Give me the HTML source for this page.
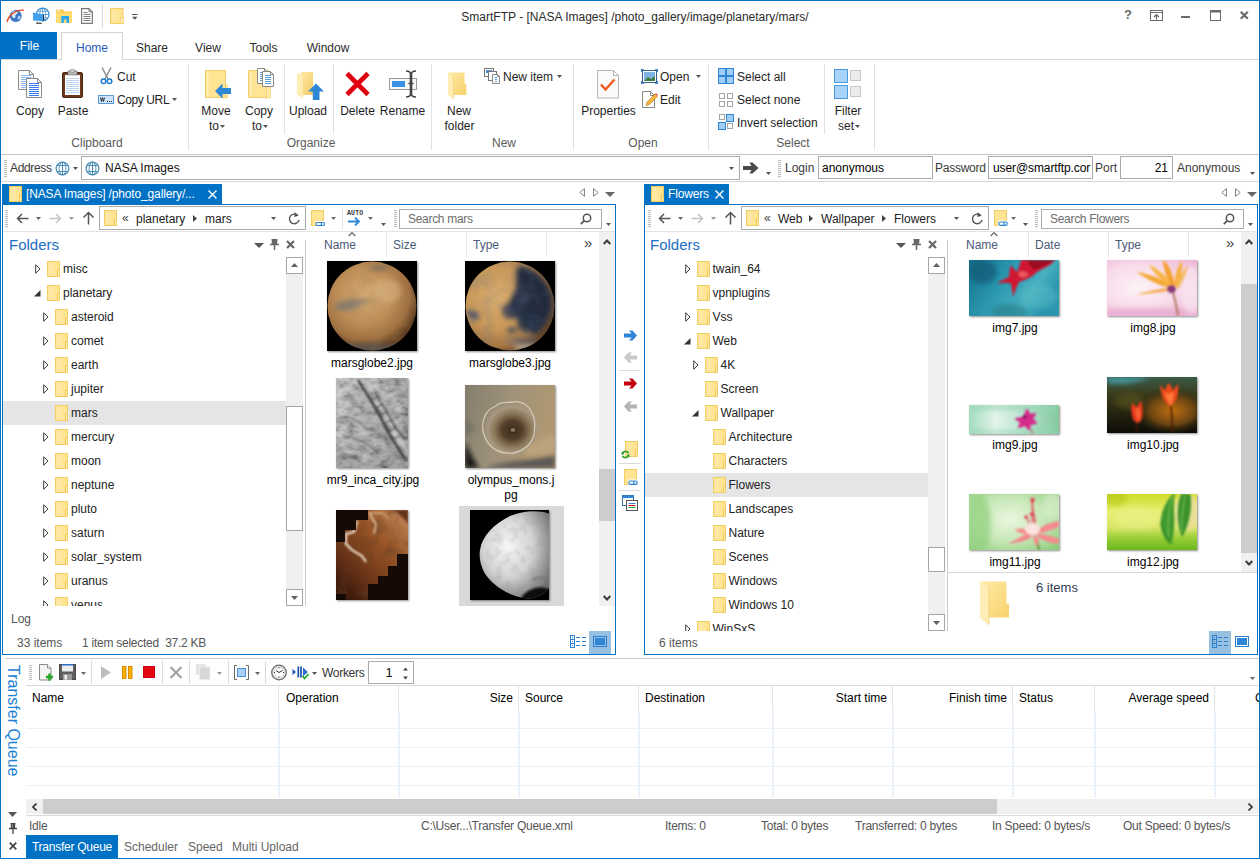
<!DOCTYPE html><html><head><meta charset="utf-8"><title>SmartFTP</title><style>
html,body{margin:0;padding:0;background:#fff;}
body{width:1260px;height:859px;overflow:hidden;position:relative;font-family:"Liberation Sans",sans-serif;font-size:12px;color:#1e1e1e;}
.b{position:absolute;box-sizing:border-box;display:block;}
.t{position:absolute;white-space:nowrap;line-height:16px;height:16px;}
.c{text-align:center;}
.r{text-align:right;}
.g{color:#5a5a5a;}
.w{color:#fff;}
.bl{color:#1a5fb4;}
.inp{background:#fff;border:1px solid #ababab;}
</style></head><body>
<div class="b" style="left:0px;top:0px;width:1260px;height:859px;border:1px solid #0072c6;pointer-events:none;z-index:50;"></div><svg class="b" style="left:6px;top:8px;" width="19" height="16" viewBox="0 0 19 16"><circle cx="9.700" cy="8" r="6" fill="#3b78c6"/><path d="M5.500 5c1.500-2 4-2.500 5.500-1.500s0.500 2-1 3s0.500 3-1.500 3.500s-3-2-3-5z" fill="#dbe8f7"/><path d="M12 8.500c1-1 2.500-0.500 2.500 0.500s-1 2.500-2 2.500s-1-2-0.500-3z" fill="#c4d8f0"/><path d="M1 13.500C3 7 9 1.500 17.500 2.200" fill="none" stroke="#e2491f" stroke-width="1.300" stroke-linecap="round"/></svg><svg class="b" style="left:32px;top:7px;" width="18" height="18" viewBox="0 0 18 18"><circle cx="10.700" cy="7.500" r="6.300" fill="#fff" stroke="#3a8ad0" stroke-width="1.200"/><ellipse cx="10.700" cy="7.500" rx="3" ry="6.300" fill="none" stroke="#3a8ad0" stroke-width="0.700"/><path d="M4.500 7.500h12.500M10.700 1.200v12.600M5.500 4.300h10.400M5.500 10.700h10.400" stroke="#3a8ad0" stroke-width="0.700" fill="none"/><path d="M1 5.500L11.500 7.500V14L1 13.500z" fill="#3fa0ee"/><path d="M11.500 7.500V14" stroke="#333" stroke-width="1"/><path d="M5 14.500l1 1.500h3M4 16.500h6" stroke="#555" stroke-width="0.900" fill="none"/></svg><svg class="b" style="left:56px;top:9px;" width="16" height="14" viewBox="0 0 16 14"><path d="M0 0.500h7l1.500 2h7.500v11.500H0z" fill="#ffc83a"/><rect x="0.800" y="1.200" width="3.500" height="1.300" fill="#e8f4ff"/><rect x="0" y="3.500" width="16" height="10.500" fill="#ffdc70"/><path d="M5.300 7h7.700v7h-2.500v-3.500h-2.700v3.500h-2.500z" fill="#2aa5ee"/></svg><svg class="b" style="left:81px;top:8px;" width="12" height="16" viewBox="0 0 12 16"><path d="M0.600 0.600h7.400l3.400 3.400v11.400h-10.800z" fill="#fff" stroke="#7a7a7a" stroke-width="1.200"/><path d="M8 0.600v3.400h3.400" fill="none" stroke="#7a7a7a" stroke-width="1"/><path d="M2.500 4.500h4M2.500 6.500h7M2.500 8.500h7M2.500 10.500h7M2.500 12.500h7" stroke="#6e6e6e" stroke-width="0.900"/></svg><div class="b" style="left:102px;top:4px;width:1px;height:24px;background:#d9d9d9;"></div><svg class="b" style="left:110px;top:8px;" width="14" height="16" viewBox="0 0 14 16"><rect x="0.500" y="0.500" width="12.500" height="15" fill="#ffe493" stroke="#f2cd62"/><rect x="1.500" y="1.500" width="5" height="13" fill="#ffebae" opacity="0.600"/><rect x="10.800" y="9.500" width="2.400" height="6" fill="#fff3c8" stroke="#f2cd62" stroke-width="0.800"/></svg><svg class="b" style="left:132px;top:14px;" width="6" height="6" viewBox="0 0 6 6"><rect x="0" y="0" width="5.500" height="1" fill="#555"/><path d="M0 2.700h5.500l-2.750 3z" fill="#555"/></svg><div class="t c" style="left:335px;top:9px;width:600px;color:#2b2b2b;">SmartFTP - [NASA Images] /photo_gallery/image/planetary/mars/</div><div class="t c" style="left:1121px;top:7px;width:14px;font-weight:bold;color:#6a6a6a;font-size:13px;">?</div><svg class="b" style="left:1150px;top:10px;" width="13" height="11" viewBox="0 0 13 11"><rect x="0.5" y="0.5" width="12" height="10" fill="none" stroke="#6a6a6a"/><path d="M1 2.5h11" stroke="#6a6a6a"/><path d="M6.5 4.5v5M4 7l2.5-2.5L9 7" stroke="#6a6a6a" fill="none" stroke-width="1.200"/></svg><div class="b" style="left:1181px;top:16px;width:9px;height:2px;background:#6a6a6a;"></div><svg class="b" style="left:1210px;top:10px;" width="11" height="11" viewBox="0 0 11 11"><rect x="0.5" y="1" width="10" height="9.5" fill="none" stroke="#6a6a6a"/><rect x="0" y="0" width="11" height="2.5" fill="#6a6a6a"/></svg><svg class="b" style="left:1240px;top:11px;" width="9" height="9" viewBox="0 0 9 9"><path d="M0.800 0.800l7 7M7.800 0.800l-7 7" stroke="#6a6a6a" stroke-width="2.200"/></svg><div class="b" style="left:1px;top:32px;width:56px;height:27px;background:#0072c6;"></div><div class="t c w" style="left:1px;top:38px;width:57px;">File</div><div class="b" style="left:0px;top:59px;width:1260px;height:1px;background:#d4d5d6;"></div><div class="b" style="left:61px;top:32px;width:62px;height:28px;background:#fff;border:1px solid #d4d5d6;border-bottom:none;"></div><div class="t c" style="left:61px;top:40px;width:62px;color:#1e5cb8;">Home</div><div class="t c" style="left:127px;top:40px;width:50px;color:#2b2b2b;">Share</div><div class="t c" style="left:185px;top:40px;width:46px;color:#2b2b2b;">View</div><div class="t c" style="left:239px;top:40px;width:49px;color:#2b2b2b;">Tools</div><div class="t c" style="left:295px;top:40px;width:66px;color:#2b2b2b;">Window</div>
<div class="b" style="left:188px;top:64px;width:1px;height:86px;background:#e1e2e3;"></div><div class="b" style="left:284px;top:64px;width:1px;height:70px;background:#e1e2e3;"></div><div class="b" style="left:333px;top:64px;width:1px;height:70px;background:#e1e2e3;"></div><div class="b" style="left:431px;top:64px;width:1px;height:86px;background:#e1e2e3;"></div><div class="b" style="left:573px;top:64px;width:1px;height:86px;background:#e1e2e3;"></div><div class="b" style="left:708px;top:64px;width:1px;height:86px;background:#e1e2e3;"></div><div class="b" style="left:824px;top:64px;width:1px;height:70px;background:#e1e2e3;"></div><div class="b" style="left:874px;top:64px;width:1px;height:86px;background:#e1e2e3;"></div><div class="t c g" style="left:47px;top:135px;width:100px;">Clipboard</div><div class="t c g" style="left:261px;top:135px;width:100px;">Organize</div><div class="t c g" style="left:454px;top:135px;width:100px;">New</div><div class="t c g" style="left:593px;top:135px;width:100px;">Open</div><div class="t c g" style="left:743px;top:135px;width:100px;">Select</div><div class="t c" style="left:-10px;top:103px;width:80px;">Copy</div><div class="t c" style="left:33px;top:103px;width:80px;">Paste</div><div class="t c" style="left:176px;top:103px;width:80px;">Move</div><div class="t c" style="left:219px;top:103px;width:80px;">Copy</div><div class="t c" style="left:268px;top:103px;width:80px;">Upload</div><div class="t c" style="left:317.5px;top:103px;width:80px;">Delete</div><div class="t c" style="left:362.5px;top:103px;width:80px;">Rename</div><div class="t c" style="left:419px;top:103px;width:80px;">New</div><div class="t c" style="left:568.5px;top:103px;width:80px;">Properties</div><div class="t c" style="left:808px;top:103px;width:80px;">Filter</div><div class="t c" style="left:174px;top:118px;width:80px;">to</div><div class="t c" style="left:217px;top:118px;width:80px;">to</div><div class="t c" style="left:419.5px;top:118px;width:80px;">folder</div><div class="t c" style="left:806px;top:118px;width:80px;">set</div><svg class="b" style="left:220px;top:125px;" width="5" height="3" viewBox="0 0 5 3"><path d="M0 0h5l-2.5 3z" fill="#555"/></svg><svg class="b" style="left:263px;top:125px;" width="5" height="3" viewBox="0 0 5 3"><path d="M0 0h5l-2.5 3z" fill="#555"/></svg><svg class="b" style="left:855px;top:125px;" width="5" height="3" viewBox="0 0 5 3"><path d="M0 0h5l-2.5 3z" fill="#555"/></svg><div class="t" style="left:117px;top:69px;">Cut</div><div class="t" style="left:117px;top:92px;letter-spacing:-0.4px;">Copy URL</div><svg class="b" style="left:172px;top:98px;" width="5" height="3" viewBox="0 0 5 3"><path d="M0 0h5l-2.5 3z" fill="#555"/></svg><div class="t" style="left:503px;top:69px;">New item</div><svg class="b" style="left:557px;top:75px;" width="5" height="3" viewBox="0 0 5 3"><path d="M0 0h5l-2.5 3z" fill="#555"/></svg><div class="t" style="left:660px;top:69px;">Open</div><svg class="b" style="left:696px;top:75px;" width="5" height="3" viewBox="0 0 5 3"><path d="M0 0h5l-2.5 3z" fill="#555"/></svg><div class="t" style="left:660px;top:92px;">Edit</div><div class="t" style="left:737px;top:69px;">Select all</div><div class="t" style="left:737px;top:92px;">Select none</div><div class="t" style="left:737px;top:115px;">Invert selection</div><svg class="b" style="left:17px;top:70px;" width="26" height="28" viewBox="0 0 26 28"><path d="M1.5 0.5h11l4 4v15h-15z" fill="#fff" stroke="#8a8a8a"/><path d="M12.5 0.5v4h4" fill="none" stroke="#8a8a8a"/><path d="M4 5.5h10" stroke="#8ab4f0"/><path d="M4 7.5h10" stroke="#8ab4f0"/><path d="M4 9.5h10" stroke="#8ab4f0"/><path d="M4 11.5h10" stroke="#8ab4f0"/><path d="M4 13.5h10" stroke="#8ab4f0"/><path d="M4 15.5h10" stroke="#8ab4f0"/><path d="M4 17.5h10" stroke="#8ab4f0"/><path d="M9.5 8.5h11l4 4v15h-15z" fill="#fff" stroke="#8a8a8a"/><path d="M20.5 8.5v4h4" fill="none" stroke="#8a8a8a"/><path d="M12 13.5h10" stroke="#3a7af0"/><path d="M12 15.5h10" stroke="#3a7af0"/><path d="M12 17.5h10" stroke="#3a7af0"/><path d="M12 19.5h10" stroke="#3a7af0"/><path d="M12 21.5h10" stroke="#3a7af0"/><path d="M12 23.5h10" stroke="#3a7af0"/><path d="M12 25.5h10" stroke="#3a7af0"/></svg><svg class="b" style="left:62px;top:69px;" width="22" height="30" viewBox="0 0 22 30"><rect x="0.5" y="3.5" width="20" height="25" rx="1.5" fill="#6b3a1e" stroke="#4a2712"/><rect x="3" y="6" width="15" height="20" fill="#fff"/><path d="M4 9.5h13M4 11.5h13M4 13.5h13M4 15.5h13M4 17.5h13M4 19.5h13M4 21.5h13M4 23.5h13" stroke="#bcd4f0"/><rect x="6" y="2" width="9" height="4" fill="#b9b9b9" stroke="#777" stroke-width="0.7"/><rect x="8.5" y="0.3" width="4" height="3" rx="1" fill="#ddd" stroke="#777" stroke-width="0.7"/></svg><svg class="b" style="left:100px;top:67px;" width="13" height="18" viewBox="0 0 13 18"><path d="M2 0.5L8 12M11 0.5L5 12" stroke="#8d8d8d" stroke-width="1.5" fill="none"/><circle cx="3.5" cy="14.2" r="2.3" fill="none" stroke="#1f7bd0" stroke-width="1.5"/><circle cx="9.5" cy="14.2" r="2.3" fill="none" stroke="#1f7bd0" stroke-width="1.5"/></svg><svg class="b" style="left:98px;top:95px;" width="16" height="9" viewBox="0 0 16 9"><rect x="0.5" y="0.5" width="15" height="8" fill="#cfe6fa" stroke="#5a9bd8"/><path d="M2.5 2.5l1 4l1-4l1 4l1-4" stroke="#223" fill="none" stroke-width="0.9"/><path d="M9 6.5h1M11 6.5h1M13 6.5h1" stroke="#223"/></svg><svg class="b" style="left:205px;top:70px;" width="27" height="29" viewBox="0 0 27 29"><rect x="0" y="0" width="21" height="28" fill="#ffe494"/><rect x="0.5" y="0.5" width="20" height="27" fill="none" stroke="#f0cf6a"/><rect x="2" y="1.500" width="1.500" height="25" fill="#fff0bc"/><rect x="20.500" y="15" width="2" height="13" fill="#ffe9a4" stroke="#f0cf6a" stroke-width="0.600"/><path d="M26 18H17.500V13.500l-7.500 7.500l7.500 7.500v-4.500H26z" fill="#2e86d6"/></svg><svg class="b" style="left:248px;top:68px;" width="27" height="31" viewBox="0 0 27 31"><rect x="0" y="2" width="21" height="28" fill="#ffe494"/><rect x="0.5" y="2.5" width="20" height="27" fill="none" stroke="#f0cf6a"/><rect x="2" y="3.500" width="1.500" height="25" fill="#fff0bc"/><rect x="18.500" y="19" width="4" height="11" fill="#ffe9a4" stroke="#f0cf6a" stroke-width="0.600"/><path d="M9.5 0.5h7l3 3v12h-10z" fill="#fff" stroke="#8a8a8a"/><path d="M16.5 0.5v3h3" fill="none" stroke="#8a8a8a"/><path d="M12 4.5h5" stroke="#5b9bd5"/><path d="M12 6.5h5" stroke="#5b9bd5"/><path d="M12 8.5h5" stroke="#5b9bd5"/><path d="M12 10.5h5" stroke="#5b9bd5"/><path d="M12 12.5h5" stroke="#5b9bd5"/><path d="M14.5 3.5h8l3 3v12h-11z" fill="#fff" stroke="#8a8a8a"/><path d="M22.5 3.5v3h3" fill="none" stroke="#8a8a8a"/><path d="M17 7.5h6" stroke="#5b9bd5"/><path d="M17 9.5h6" stroke="#5b9bd5"/><path d="M17 11.5h6" stroke="#5b9bd5"/><path d="M17 13.5h6" stroke="#5b9bd5"/><path d="M17 15.5h6" stroke="#5b9bd5"/></svg><svg class="b" style="left:297px;top:72px;" width="28" height="29" viewBox="0 0 28 29"><defs><linearGradient id="ufg" x1="0" y1="0" x2="1" y2="1"><stop offset="0" stop-color="#ffe9a4"/><stop offset="1" stop-color="#f2cc66"/></linearGradient></defs><path d="M4 0h12v23H4z" fill="url(#ufg)"/><path d="M0 0.500L5.800 4V27L0 22.500z" fill="#ffedb4"/><path d="M19 11.500l8 8h-4.500V28h-6.700v-8.500H11z" fill="#2e86d6"/></svg><svg class="b" style="left:344px;top:71px;" width="27" height="26" viewBox="0 0 27 26"><path d="M3 2.5L24 23.5M24 2.5L3 23.5" stroke="#e0000f" stroke-width="4.6"/></svg><svg class="b" style="left:389px;top:70px;" width="29" height="28" viewBox="0 0 29 28"><rect x="0.5" y="8.500" width="27" height="11" fill="#f6f8fa" stroke="#9a9a9a"/><rect x="3" y="11" width="13" height="6" fill="#3a92e4"/><path d="M17 1c3 0 4.5 1 4.500 3v20c0 2-1.500 3-4.500 3M27 1c-3 0-4.500 1-4.500 3v20c0 2 1.500 3 4.500 3M19.500 13.500h5" stroke="#444" stroke-width="1.600" fill="none"/></svg><svg class="b" style="left:447.5px;top:71.5px;" width="19" height="28" viewBox="0 0 19 28"><defs><linearGradient id="nfg" x1="0" y1="0" x2="1" y2="1"><stop offset="0" stop-color="#ffe9a4"/><stop offset="1" stop-color="#f7d26c"/></linearGradient></defs><path d="M0 0.500h16.500v11h1.800v11.500H0z" fill="url(#nfg)"/><path d="M0 0.500L5.500 4V27.500L0 23z" fill="#ffedb4"/><path d="M5.500 4V27.500" stroke="#efcf78" stroke-width="0.700"/></svg><svg class="b" style="left:484px;top:68px;" width="17" height="17" viewBox="0 0 17 17"><rect x="0.5" y="0.5" width="9" height="8" fill="#fff" stroke="#777"/><rect x="2" y="2" width="6" height="3" fill="#4a90d9"/><rect x="4.500" y="3.500" width="8" height="9" fill="#fff" stroke="#777"/><path d="M8.5 6.5h5l2 2v7h-7z" fill="#fff" stroke="#8a8a8a"/><path d="M13.5 6.5v2h2" fill="none" stroke="#8a8a8a"/><path d="M11 9.5h2" stroke="#5b9bd5"/><path d="M11 11.5h2" stroke="#5b9bd5"/><path d="M11 13.5h2" stroke="#5b9bd5"/></svg><svg class="b" style="left:597px;top:70px;" width="23" height="29" viewBox="0 0 23 29"><path d="M0.5 0.5h16l5 5v22.500h-21z" fill="#fbfbfb" stroke="#b5b5b5"/><path d="M16.500 0.500v5h5" fill="none" stroke="#b5b5b5"/><path d="M4 14.500l4.500 5L17.500 9.500" fill="none" stroke="#f05a1e" stroke-width="2.400"/></svg><svg class="b" style="left:641px;top:69px;" width="17" height="15" viewBox="0 0 17 15"><rect x="1.5" y="1.5" width="14" height="12" fill="#fff" stroke="#3a5f8a"/><rect x="3" y="3" width="11" height="9" fill="#7fb4e0"/><path d="M3 12l4-4l3 2l4-3v5z" fill="#3e7a3a"/><path d="M0 3V0h3M14 0h3v3M17 12v3h-3M3 15H0v-3" fill="none" stroke="#1f6fc4" stroke-width="1.600"/></svg><svg class="b" style="left:642px;top:91px;" width="16" height="17" viewBox="0 0 16 17"><path d="M0.5 0.500h8l4 4v12h-12z" fill="#fff" stroke="#8a8a8a"/><path d="M8.500 0.500v4h4" fill="none" stroke="#8a8a8a"/><path d="M4 14.500l1-3.500l8-8l2.500 2.500l-8 8z" fill="#f4b63f" stroke="#b8801c" stroke-width="0.600"/><path d="M13 3l1-1l2 2l-1 1z" fill="#e8584a"/></svg><svg class="b" style="left:718px;top:68px;" width="16" height="16" viewBox="0 0 16 16"><rect x="0.5" y="0.5" width="7" height="7" fill="#9fcdf7" stroke="#2e86d6"/><rect x="8.5" y="0.5" width="7" height="7" fill="#9fcdf7" stroke="#2e86d6"/><rect x="0.5" y="8.5" width="7" height="7" fill="#9fcdf7" stroke="#2e86d6"/><rect x="8.5" y="8.5" width="7" height="7" fill="#9fcdf7" stroke="#2e86d6"/></svg><svg class="b" style="left:719px;top:93px;" width="14" height="14" viewBox="0 0 14 14"><rect x="0.5" y="0.5" width="5" height="5" fill="#fff" stroke="#a5a5a5"/><rect x="8.5" y="0.5" width="5" height="5" fill="#fff" stroke="#a5a5a5"/><rect x="0.5" y="8.5" width="5" height="5" fill="#fff" stroke="#a5a5a5"/><rect x="8.5" y="8.5" width="5" height="5" fill="#fff" stroke="#a5a5a5"/></svg><svg class="b" style="left:718px;top:114px;" width="16" height="16" viewBox="0 0 16 16"><rect x="1.5" y="0.5" width="5" height="5" fill="#fff" stroke="#a5a5a5"/><rect x="8.5" y="0.5" width="7" height="7" fill="#9fcdf7" stroke="#2e86d6"/><rect x="0.5" y="8.5" width="7" height="7" fill="#9fcdf7" stroke="#2e86d6"/><rect x="9.5" y="9.5" width="5" height="5" fill="#fff" stroke="#a5a5a5"/></svg><svg class="b" style="left:834px;top:69px;" width="28" height="30" viewBox="0 0 28 30"><rect x="0.5" y="0.5" width="13" height="13" fill="#a9d3f8" stroke="#4a98de"/><rect x="0.5" y="16.5" width="13" height="13" fill="#a9d3f8" stroke="#4a98de"/><rect x="16.5" y="1.5" width="10" height="10" fill="#ececec" stroke="#c6c6c6"/><rect x="16.5" y="17.5" width="10" height="10" fill="#ececec" stroke="#c6c6c6"/></svg>
<div class="b" style="left:0px;top:154px;width:1260px;height:1px;background:#c6c7c8;"></div><div class="b" style="left:0px;top:181px;width:1260px;height:1px;background:#d5d6d7;"></div><svg class="b" style="left:4px;top:160px;" width="3" height="18" viewBox="0 0 3 18"><rect x="0" y="0" width="3" height="1" fill="#b9b9b9"/><rect x="0" y="2" width="3" height="1" fill="#b9b9b9"/><rect x="0" y="4" width="3" height="1" fill="#b9b9b9"/><rect x="0" y="6" width="3" height="1" fill="#b9b9b9"/><rect x="0" y="8" width="3" height="1" fill="#b9b9b9"/><rect x="0" y="10" width="3" height="1" fill="#b9b9b9"/><rect x="0" y="12" width="3" height="1" fill="#b9b9b9"/><rect x="0" y="14" width="3" height="1" fill="#b9b9b9"/><rect x="0" y="16" width="3" height="1" fill="#b9b9b9"/></svg><div class="t" style="left:10px;top:160px;color:#3a3a3a;letter-spacing:-0.35px;">Address</div><svg class="b" style="left:55px;top:161px;" width="15" height="15" viewBox="0 0 15 15"><circle cx="7.5" cy="7.5" r="6.400" fill="#fff" stroke="#4a8db7" stroke-width="1.200"/><ellipse cx="7.5" cy="7.5" rx="3.400" ry="6.400" fill="none" stroke="#4a8db7" stroke-width="0.900"/><path d="M7.5 1v13M1.800 4.500h11.400M1.800 10.500h11.400" stroke="#4a8db7" stroke-width="1" fill="none" shape-rendering="crispEdges"/></svg><svg class="b" style="left:73px;top:167px;" width="5" height="3" viewBox="0 0 5 3"><path d="M0 0h5l-2.5 3z" fill="#555"/></svg><div class="b inp" style="left:81px;top:156px;width:659px;height:24px;"></div><svg class="b" style="left:85px;top:161px;" width="15" height="15" viewBox="0 0 15 15"><circle cx="7.5" cy="7.5" r="6.400" fill="#fff" stroke="#4a8db7" stroke-width="1.200"/><ellipse cx="7.5" cy="7.5" rx="3.400" ry="6.400" fill="none" stroke="#4a8db7" stroke-width="0.900"/><path d="M7.5 1v13M1.800 4.500h11.400M1.800 10.500h11.400" stroke="#4a8db7" stroke-width="1" fill="none" shape-rendering="crispEdges"/></svg><div class="t" style="left:105px;top:160px;color:#111;">NASA Images</div><svg class="b" style="left:729px;top:167px;" width="5" height="3" viewBox="0 0 5 3"><path d="M0 0h5l-2.5 3z" fill="#555"/></svg><svg class="b" style="left:743px;top:162px;" width="16" height="12" viewBox="0 0 16 12"><path d="M0 4h8.500L6.500 0.500h3L15.500 6L9.500 11.500h-3L8.500 8H0z" fill="#4a4a4a"/></svg><svg class="b" style="left:766px;top:172px;" width="5" height="3" viewBox="0 0 5 3"><path d="M0 0h5l-2.5 3z" fill="#555"/></svg><svg class="b" style="left:778px;top:160px;" width="3" height="18" viewBox="0 0 3 18"><rect x="0" y="0" width="3" height="1" fill="#b9b9b9"/><rect x="0" y="2" width="3" height="1" fill="#b9b9b9"/><rect x="0" y="4" width="3" height="1" fill="#b9b9b9"/><rect x="0" y="6" width="3" height="1" fill="#b9b9b9"/><rect x="0" y="8" width="3" height="1" fill="#b9b9b9"/><rect x="0" y="10" width="3" height="1" fill="#b9b9b9"/><rect x="0" y="12" width="3" height="1" fill="#b9b9b9"/><rect x="0" y="14" width="3" height="1" fill="#b9b9b9"/><rect x="0" y="16" width="3" height="1" fill="#b9b9b9"/></svg><div class="t" style="left:785px;top:160px;color:#3a3a3a;">Login</div><div class="b inp" style="left:818px;top:156px;width:115px;height:23px;"></div><div class="t" style="left:822px;top:160px;color:#000;">anonymous</div><div class="t" style="left:935px;top:160px;color:#3a3a3a;letter-spacing:-0.25px;">Password</div><div class="b inp" style="left:988px;top:156px;width:105px;height:23px;overflow:hidden;"></div><div class="t" style="left:993px;top:160px;color:#000;letter-spacing:-0.1px;">user@smartftp.cor</div><div class="t" style="left:1095px;top:160px;color:#3a3a3a;">Port</div><div class="b inp" style="left:1120px;top:156px;width:53px;height:23px;"></div><div class="t r" style="left:1120px;top:160px;width:48px;color:#000;">21</div><div class="t" style="left:1177px;top:160px;color:#3a3a3a;">Anonymous</div><svg class="b" style="left:1250px;top:172px;" width="5" height="3" viewBox="0 0 5 3"><path d="M0 0h5l-2.5 3z" fill="#555"/></svg>
<div class="b" style="left:2px;top:204px;width:614px;height:451px;border:1px solid #0072c6;background:#fff;"></div><div class="b" style="left:2px;top:184px;width:220px;height:21px;background:#0072c6;"></div><svg class="b" style="left:9px;top:186px;" width="13" height="16" viewBox="0 0 13 16"><rect x="0.5" y="0.5" width="12" height="15" fill="#ffe493" stroke="#f2cd62"/><rect x="1.5" y="1.5" width="5" height="13" fill="#ffebae" opacity="0.6"/><rect x="10.500" y="9" width="2" height="6.500" fill="#fff0be"/><path d="M10.500 15.500V9h2.500" fill="none" stroke="#f0c654" stroke-width="1"/><rect x="0.500" y="0.500" width="12" height="15" fill="none" stroke="#f2cd62"/></svg><div class="t w" style="left:26px;top:186px;letter-spacing:-0.15px;">[NASA Images] /photo_gallery/...</div><svg class="b" style="left:208px;top:190px;" width="9" height="9" viewBox="0 0 9 9"><path d="M0.500 0.500l8 8M8.500 0.500l-8 8" stroke="#fff" stroke-width="1.400"/></svg><svg class="b" style="left:579px;top:188px;" width="6" height="9" viewBox="0 0 6 9"><path d="M5.500 0.700V8.300L0.800 4.500z" fill="#fff" stroke="#777" stroke-width="0.900"/></svg><svg class="b" style="left:593px;top:188px;" width="6" height="9" viewBox="0 0 6 9"><path d="M0.500 0.700V8.300L5.200 4.500z" fill="#fff" stroke="#777" stroke-width="0.900"/></svg><svg class="b" style="left:605px;top:192px;" width="10" height="5" viewBox="0 0 10 5"><path d="M0 0h10l-5 5z" fill="#666"/></svg><svg class="b" style="left:5px;top:210px;" width="3" height="17" viewBox="0 0 3 17"><rect x="0" y="0" width="3" height="1" fill="#b9b9b9"/><rect x="0" y="2" width="3" height="1" fill="#b9b9b9"/><rect x="0" y="4" width="3" height="1" fill="#b9b9b9"/><rect x="0" y="6" width="3" height="1" fill="#b9b9b9"/><rect x="0" y="8" width="3" height="1" fill="#b9b9b9"/><rect x="0" y="10" width="3" height="1" fill="#b9b9b9"/><rect x="0" y="12" width="3" height="1" fill="#b9b9b9"/><rect x="0" y="14" width="3" height="1" fill="#b9b9b9"/><rect x="0" y="16" width="3" height="1" fill="#b9b9b9"/></svg><svg class="b" style="left:16px;top:213px;" width="13" height="11" viewBox="0 0 13 11"><path d="M12.500 5.500H1.500M6 1L1.500 5.500L6 10" fill="none" stroke="#555" stroke-width="1.500"/></svg><svg class="b" style="left:36px;top:217px;" width="5" height="3" viewBox="0 0 5 3"><path d="M0 0h5l-2.5 3z" fill="#666"/></svg><svg class="b" style="left:49px;top:213px;" width="13" height="11" viewBox="0 0 13 11"><path d="M0.500 5.500H11.500M7 1L11.500 5.500L7 10" fill="none" stroke="#c3c3c3" stroke-width="1.500"/></svg><svg class="b" style="left:69px;top:217px;" width="5" height="3" viewBox="0 0 5 3"><path d="M0 0h5l-2.5 3z" fill="#9a9a9a"/></svg><svg class="b" style="left:82px;top:211px;" width="13" height="14" viewBox="0 0 13 14"><path d="M6.500 13.500V1.500M1.500 6.500L6.500 1.500L11.500 6.500" fill="none" stroke="#555" stroke-width="1.500"/></svg><div class="b inp" style="left:99px;top:206px;width:207px;height:24px;"></div><svg class="b" style="left:104px;top:210px;" width="13" height="16" viewBox="0 0 13 16"><rect x="0.5" y="0.5" width="12" height="15" fill="#ffe493" stroke="#f2cd62"/><rect x="1.5" y="1.5" width="5" height="13" fill="#ffebae" opacity="0.6"/><rect x="10.500" y="9" width="2" height="6.500" fill="#fff0be"/><path d="M10.500 15.500V9h2.500" fill="none" stroke="#f0c654" stroke-width="1"/><rect x="0.500" y="0.500" width="12" height="15" fill="none" stroke="#f2cd62"/></svg><div class="t" style="left:122px;top:210px;color:#444;">&laquo;</div><div class="t" style="left:136px;top:211px;color:#222;">planetary</div><svg class="b" style="left:193px;top:215px;" width="4" height="7" viewBox="0 0 4 7"><path d="M0 0L4 3.500L0 7z" fill="#444"/></svg><div class="t" style="left:205px;top:211px;color:#222;">mars</div><svg class="b" style="left:271px;top:217px;" width="5" height="3" viewBox="0 0 5 3"><path d="M0 0h5l-2.5 3z" fill="#555"/></svg><svg class="b" style="left:288px;top:212px;" width="12" height="13" viewBox="0 0 12 13"><path d="M9.800 3.600A4.800 4.800 0 1 0 11 7.800" fill="none" stroke="#555" stroke-width="1.400"/><path d="M6.800 0.300L10.600 3.800L6.200 5z" fill="#555"/></svg><div class="b" style="left:3px;top:231px;width:612px;height:1px;background:#e3e3e3;"></div><svg class="b" style="left:311px;top:210px;" width="14" height="17" viewBox="0 0 14 17"><rect x="0.500" y="0.500" width="12" height="15" fill="#ffe493" stroke="#f2cd62"/><rect x="5" y="11" width="9" height="6" fill="#fff"/><path d="M6.500 12.500h2.500a1.500 1.500 0 0 1 0 3H6.500a1.500 1.500 0 0 1 0-3zM10 12.500h2a1.500 1.500 0 0 1 0 3h-2" fill="none" stroke="#2e86d6" stroke-width="1.200"/></svg><svg class="b" style="left:331px;top:217px;" width="5" height="3" viewBox="0 0 5 3"><path d="M0 0h5l-2.5 3z" fill="#666"/></svg><div class="b" style="left:342px;top:208px;width:1px;height:21px;background:#e0e0e0;"></div><div class="t" style="left:347px;top:210px;font-size:6.500px;font-weight:bold;color:#333;font-family:'Liberation Mono',monospace;line-height:8px;height:8px;letter-spacing:0.2px;">AUTO</div><svg class="b" style="left:348px;top:217px;" width="13" height="9" viewBox="0 0 13 9"><path d="M0 4.500h11M7 0.500l4 4l-4 4" fill="none" stroke="#2e86d6" stroke-width="1.800"/></svg><svg class="b" style="left:368px;top:217px;" width="5" height="3" viewBox="0 0 5 3"><path d="M0 0h5l-2.5 3z" fill="#666"/></svg><svg class="b" style="left:381px;top:223px;" width="5" height="3" viewBox="0 0 5 3"><path d="M0 0h5l-2.5 3z" fill="#555"/></svg><svg class="b" style="left:394px;top:210px;" width="3" height="17" viewBox="0 0 3 17"><rect x="0" y="0" width="3" height="1" fill="#b9b9b9"/><rect x="0" y="2" width="3" height="1" fill="#b9b9b9"/><rect x="0" y="4" width="3" height="1" fill="#b9b9b9"/><rect x="0" y="6" width="3" height="1" fill="#b9b9b9"/><rect x="0" y="8" width="3" height="1" fill="#b9b9b9"/><rect x="0" y="10" width="3" height="1" fill="#b9b9b9"/><rect x="0" y="12" width="3" height="1" fill="#b9b9b9"/><rect x="0" y="14" width="3" height="1" fill="#b9b9b9"/><rect x="0" y="16" width="3" height="1" fill="#b9b9b9"/></svg><div class="b inp" style="left:399px;top:209px;width:203px;height:20px;"></div><div class="t" style="left:408px;top:211px;color:#6d6d6d;letter-spacing:-0.3px;">Search mars</div><svg class="b" style="left:580px;top:213px;" width="12" height="12" viewBox="0 0 12 12"><circle cx="7" cy="5" r="3.700" fill="none" stroke="#555" stroke-width="1.500"/><path d="M4.300 7.700L0.800 11.200" stroke="#555" stroke-width="1.800"/></svg><svg class="b" style="left:606px;top:223px;" width="5" height="3" viewBox="0 0 5 3"><path d="M0 0h5l-2.5 3z" fill="#555"/></svg><div class="t" style="left:9px;top:236px;font-size:15px;line-height:18px;height:18px;color:#1b6ec2;">Folders</div><svg class="b" style="left:254px;top:243px;" width="10" height="5" viewBox="0 0 10 5"><path d="M0 0h10l-5 5z" fill="#555"/></svg><svg class="b" style="left:270px;top:239px;" width="9" height="11" viewBox="0 0 9 11"><path d="M1.500 0.700h6M2.500 0.500v5M6.500 0.500v5M0 5.500h9M4.500 5.500v5.500" fill="none" stroke="#666" stroke-width="1.500"/><rect x="3" y="0.500" width="3" height="5" fill="#666"/></svg><svg class="b" style="left:286px;top:239.5px;" width="9" height="9" viewBox="0 0 9 9"><path d="M1 1l7 7M8 1l-7 7" stroke="#666" stroke-width="2.200"/></svg><div class="b" style="left:3px;top:257px;width:283px;height:349px;overflow:hidden;"><div class="b" style="left:-3px;top:-257px;width:10px;height:10px;"><svg class="b" style="left:35px;top:264px;" width="6" height="10" viewBox="0 0 6 10"><path d="M0.700 0.800L5 5L0.700 9.200z" fill="#fff" stroke="#3c3c3c" stroke-width="1"/></svg><svg class="b" style="left:47px;top:261px;" width="13" height="16" viewBox="0 0 13 16"><rect x="0.5" y="0.5" width="12" height="15" fill="#ffe493" stroke="#f2cd62"/><rect x="1.5" y="1.5" width="5" height="13" fill="#ffebae" opacity="0.6"/><rect x="10.500" y="9" width="2" height="6.500" fill="#fff0be"/><path d="M10.500 15.500V9h2.500" fill="none" stroke="#f0c654" stroke-width="1"/><rect x="0.500" y="0.500" width="12" height="15" fill="none" stroke="#f2cd62"/></svg><div class="t" style="left:63px;top:261px;color:#222;">misc</div><svg class="b" style="left:34px;top:290px;" width="7" height="7" viewBox="0 0 7 7"><path d="M6.500 0V6.500H0z" fill="#333"/></svg><svg class="b" style="left:47px;top:285px;" width="13" height="16" viewBox="0 0 13 16"><rect x="0.5" y="0.5" width="12" height="15" fill="#ffe493" stroke="#f2cd62"/><rect x="1.5" y="1.5" width="5" height="13" fill="#ffebae" opacity="0.6"/><rect x="10.500" y="9" width="2" height="6.500" fill="#fff0be"/><path d="M10.500 15.500V9h2.500" fill="none" stroke="#f0c654" stroke-width="1"/><rect x="0.500" y="0.500" width="12" height="15" fill="none" stroke="#f2cd62"/></svg><div class="t" style="left:63px;top:285px;color:#222;">planetary</div><svg class="b" style="left:43px;top:312px;" width="6" height="10" viewBox="0 0 6 10"><path d="M0.700 0.800L5 5L0.700 9.200z" fill="#fff" stroke="#3c3c3c" stroke-width="1"/></svg><svg class="b" style="left:55px;top:309px;" width="13" height="16" viewBox="0 0 13 16"><rect x="0.5" y="0.5" width="12" height="15" fill="#ffe493" stroke="#f2cd62"/><rect x="1.5" y="1.5" width="5" height="13" fill="#ffebae" opacity="0.6"/><rect x="10.500" y="9" width="2" height="6.500" fill="#fff0be"/><path d="M10.500 15.500V9h2.500" fill="none" stroke="#f0c654" stroke-width="1"/><rect x="0.500" y="0.500" width="12" height="15" fill="none" stroke="#f2cd62"/></svg><div class="t" style="left:71px;top:309px;color:#222;">asteroid</div><svg class="b" style="left:43px;top:336px;" width="6" height="10" viewBox="0 0 6 10"><path d="M0.700 0.800L5 5L0.700 9.200z" fill="#fff" stroke="#3c3c3c" stroke-width="1"/></svg><svg class="b" style="left:55px;top:333px;" width="13" height="16" viewBox="0 0 13 16"><rect x="0.5" y="0.5" width="12" height="15" fill="#ffe493" stroke="#f2cd62"/><rect x="1.5" y="1.5" width="5" height="13" fill="#ffebae" opacity="0.6"/><rect x="10.500" y="9" width="2" height="6.500" fill="#fff0be"/><path d="M10.500 15.500V9h2.500" fill="none" stroke="#f0c654" stroke-width="1"/><rect x="0.500" y="0.500" width="12" height="15" fill="none" stroke="#f2cd62"/></svg><div class="t" style="left:71px;top:333px;color:#222;">comet</div><svg class="b" style="left:43px;top:360px;" width="6" height="10" viewBox="0 0 6 10"><path d="M0.700 0.800L5 5L0.700 9.200z" fill="#fff" stroke="#3c3c3c" stroke-width="1"/></svg><svg class="b" style="left:55px;top:357px;" width="13" height="16" viewBox="0 0 13 16"><rect x="0.5" y="0.5" width="12" height="15" fill="#ffe493" stroke="#f2cd62"/><rect x="1.5" y="1.5" width="5" height="13" fill="#ffebae" opacity="0.6"/><rect x="10.500" y="9" width="2" height="6.500" fill="#fff0be"/><path d="M10.500 15.500V9h2.500" fill="none" stroke="#f0c654" stroke-width="1"/><rect x="0.500" y="0.500" width="12" height="15" fill="none" stroke="#f2cd62"/></svg><div class="t" style="left:71px;top:357px;color:#222;">earth</div><svg class="b" style="left:43px;top:384px;" width="6" height="10" viewBox="0 0 6 10"><path d="M0.700 0.800L5 5L0.700 9.200z" fill="#fff" stroke="#3c3c3c" stroke-width="1"/></svg><svg class="b" style="left:55px;top:381px;" width="13" height="16" viewBox="0 0 13 16"><rect x="0.5" y="0.5" width="12" height="15" fill="#ffe493" stroke="#f2cd62"/><rect x="1.5" y="1.5" width="5" height="13" fill="#ffebae" opacity="0.6"/><rect x="10.500" y="9" width="2" height="6.500" fill="#fff0be"/><path d="M10.500 15.500V9h2.500" fill="none" stroke="#f0c654" stroke-width="1"/><rect x="0.500" y="0.500" width="12" height="15" fill="none" stroke="#f2cd62"/></svg><div class="t" style="left:71px;top:381px;color:#222;">jupiter</div><div class="b" style="left:3px;top:401px;width:283px;height:24px;background:#e5e5e5;"></div><svg class="b" style="left:55px;top:405px;" width="13" height="16" viewBox="0 0 13 16"><rect x="0.5" y="0.5" width="12" height="15" fill="#ffe493" stroke="#f2cd62"/><rect x="1.5" y="1.5" width="5" height="13" fill="#ffebae" opacity="0.6"/><rect x="10.500" y="9" width="2" height="6.500" fill="#fff0be"/><path d="M10.500 15.500V9h2.500" fill="none" stroke="#f0c654" stroke-width="1"/><rect x="0.500" y="0.500" width="12" height="15" fill="none" stroke="#f2cd62"/></svg><div class="t" style="left:71px;top:405px;color:#222;">mars</div><svg class="b" style="left:43px;top:432px;" width="6" height="10" viewBox="0 0 6 10"><path d="M0.700 0.800L5 5L0.700 9.200z" fill="#fff" stroke="#3c3c3c" stroke-width="1"/></svg><svg class="b" style="left:55px;top:429px;" width="13" height="16" viewBox="0 0 13 16"><rect x="0.5" y="0.5" width="12" height="15" fill="#ffe493" stroke="#f2cd62"/><rect x="1.5" y="1.5" width="5" height="13" fill="#ffebae" opacity="0.6"/><rect x="10.500" y="9" width="2" height="6.500" fill="#fff0be"/><path d="M10.500 15.500V9h2.500" fill="none" stroke="#f0c654" stroke-width="1"/><rect x="0.500" y="0.500" width="12" height="15" fill="none" stroke="#f2cd62"/></svg><div class="t" style="left:71px;top:429px;color:#222;">mercury</div><svg class="b" style="left:43px;top:456px;" width="6" height="10" viewBox="0 0 6 10"><path d="M0.700 0.800L5 5L0.700 9.200z" fill="#fff" stroke="#3c3c3c" stroke-width="1"/></svg><svg class="b" style="left:55px;top:453px;" width="13" height="16" viewBox="0 0 13 16"><rect x="0.5" y="0.5" width="12" height="15" fill="#ffe493" stroke="#f2cd62"/><rect x="1.5" y="1.5" width="5" height="13" fill="#ffebae" opacity="0.6"/><rect x="10.500" y="9" width="2" height="6.500" fill="#fff0be"/><path d="M10.500 15.500V9h2.500" fill="none" stroke="#f0c654" stroke-width="1"/><rect x="0.500" y="0.500" width="12" height="15" fill="none" stroke="#f2cd62"/></svg><div class="t" style="left:71px;top:453px;color:#222;">moon</div><svg class="b" style="left:43px;top:480px;" width="6" height="10" viewBox="0 0 6 10"><path d="M0.700 0.800L5 5L0.700 9.200z" fill="#fff" stroke="#3c3c3c" stroke-width="1"/></svg><svg class="b" style="left:55px;top:477px;" width="13" height="16" viewBox="0 0 13 16"><rect x="0.5" y="0.5" width="12" height="15" fill="#ffe493" stroke="#f2cd62"/><rect x="1.5" y="1.5" width="5" height="13" fill="#ffebae" opacity="0.6"/><rect x="10.500" y="9" width="2" height="6.500" fill="#fff0be"/><path d="M10.500 15.500V9h2.500" fill="none" stroke="#f0c654" stroke-width="1"/><rect x="0.500" y="0.500" width="12" height="15" fill="none" stroke="#f2cd62"/></svg><div class="t" style="left:71px;top:477px;color:#222;">neptune</div><svg class="b" style="left:43px;top:504px;" width="6" height="10" viewBox="0 0 6 10"><path d="M0.700 0.800L5 5L0.700 9.200z" fill="#fff" stroke="#3c3c3c" stroke-width="1"/></svg><svg class="b" style="left:55px;top:501px;" width="13" height="16" viewBox="0 0 13 16"><rect x="0.5" y="0.5" width="12" height="15" fill="#ffe493" stroke="#f2cd62"/><rect x="1.5" y="1.5" width="5" height="13" fill="#ffebae" opacity="0.6"/><rect x="10.500" y="9" width="2" height="6.500" fill="#fff0be"/><path d="M10.500 15.500V9h2.500" fill="none" stroke="#f0c654" stroke-width="1"/><rect x="0.500" y="0.500" width="12" height="15" fill="none" stroke="#f2cd62"/></svg><div class="t" style="left:71px;top:501px;color:#222;">pluto</div><svg class="b" style="left:43px;top:528px;" width="6" height="10" viewBox="0 0 6 10"><path d="M0.700 0.800L5 5L0.700 9.200z" fill="#fff" stroke="#3c3c3c" stroke-width="1"/></svg><svg class="b" style="left:55px;top:525px;" width="13" height="16" viewBox="0 0 13 16"><rect x="0.5" y="0.5" width="12" height="15" fill="#ffe493" stroke="#f2cd62"/><rect x="1.5" y="1.5" width="5" height="13" fill="#ffebae" opacity="0.6"/><rect x="10.500" y="9" width="2" height="6.500" fill="#fff0be"/><path d="M10.500 15.500V9h2.500" fill="none" stroke="#f0c654" stroke-width="1"/><rect x="0.500" y="0.500" width="12" height="15" fill="none" stroke="#f2cd62"/></svg><div class="t" style="left:71px;top:525px;color:#222;">saturn</div><svg class="b" style="left:43px;top:552px;" width="6" height="10" viewBox="0 0 6 10"><path d="M0.700 0.800L5 5L0.700 9.200z" fill="#fff" stroke="#3c3c3c" stroke-width="1"/></svg><svg class="b" style="left:55px;top:549px;" width="13" height="16" viewBox="0 0 13 16"><rect x="0.5" y="0.5" width="12" height="15" fill="#ffe493" stroke="#f2cd62"/><rect x="1.5" y="1.5" width="5" height="13" fill="#ffebae" opacity="0.6"/><rect x="10.500" y="9" width="2" height="6.500" fill="#fff0be"/><path d="M10.500 15.500V9h2.500" fill="none" stroke="#f0c654" stroke-width="1"/><rect x="0.500" y="0.500" width="12" height="15" fill="none" stroke="#f2cd62"/></svg><div class="t" style="left:71px;top:549px;color:#222;">solar_system</div><svg class="b" style="left:43px;top:576px;" width="6" height="10" viewBox="0 0 6 10"><path d="M0.700 0.800L5 5L0.700 9.200z" fill="#fff" stroke="#3c3c3c" stroke-width="1"/></svg><svg class="b" style="left:55px;top:573px;" width="13" height="16" viewBox="0 0 13 16"><rect x="0.5" y="0.5" width="12" height="15" fill="#ffe493" stroke="#f2cd62"/><rect x="1.5" y="1.5" width="5" height="13" fill="#ffebae" opacity="0.6"/><rect x="10.500" y="9" width="2" height="6.500" fill="#fff0be"/><path d="M10.500 15.500V9h2.500" fill="none" stroke="#f0c654" stroke-width="1"/><rect x="0.500" y="0.500" width="12" height="15" fill="none" stroke="#f2cd62"/></svg><div class="t" style="left:71px;top:573px;color:#222;">uranus</div><svg class="b" style="left:43px;top:600px;" width="6" height="10" viewBox="0 0 6 10"><path d="M0.700 0.800L5 5L0.700 9.200z" fill="#fff" stroke="#3c3c3c" stroke-width="1"/></svg><svg class="b" style="left:55px;top:597px;" width="13" height="16" viewBox="0 0 13 16"><rect x="0.5" y="0.5" width="12" height="15" fill="#ffe493" stroke="#f2cd62"/><rect x="1.5" y="1.5" width="5" height="13" fill="#ffebae" opacity="0.6"/><rect x="10.500" y="9" width="2" height="6.500" fill="#fff0be"/><path d="M10.500 15.500V9h2.500" fill="none" stroke="#f0c654" stroke-width="1"/><rect x="0.500" y="0.500" width="12" height="15" fill="none" stroke="#f2cd62"/></svg><div class="t" style="left:71px;top:597px;color:#222;">venus</div></div></div><div class="b" style="left:286px;top:257px;width:17px;height:349px;background:#f0f0f0;"></div><div class="b" style="left:286px;top:257px;width:17px;height:17px;background:#fff;border:1px solid #a6a6a6;"></div><svg class="b" style="left:291px;top:263px;" width="7" height="4" viewBox="0 0 7 4"><path d="M0 4L3.500 0L7 4z" fill="#606060"/></svg><div class="b" style="left:286px;top:589px;width:17px;height:17px;background:#fff;border:1px solid #a6a6a6;"></div><svg class="b" style="left:291px;top:596px;" width="7" height="4" viewBox="0 0 7 4"><path d="M0 0L3.500 4L7 0z" fill="#606060"/></svg><div class="b" style="left:286px;top:406px;width:17px;height:125px;background:#fff;border:1px solid #a6a6a6;"></div><div class="b" style="left:305px;top:240px;width:1px;height:366px;background:#c8c8c8;"></div><div class="t" style="left:324px;top:237px;color:#4a5a78;">Name</div><div class="t" style="left:393px;top:237px;color:#4a5a78;">Size</div><div class="t" style="left:473px;top:237px;color:#4a5a78;">Type</div><svg class="b" style="left:348px;top:231px;" width="8" height="6" viewBox="0 0 8 6"><path d="M0.700 5L4 1.500L7.300 5" fill="none" stroke="#666" stroke-width="1.2"/></svg><div class="b" style="left:386px;top:232px;width:1px;height:25px;background:#e5e5e5;"></div><div class="b" style="left:466px;top:232px;width:1px;height:25px;background:#e5e5e5;"></div><div class="b" style="left:546px;top:232px;width:1px;height:25px;background:#e5e5e5;"></div><div class="t" style="left:584px;top:235px;color:#444;font-size:15px;">&raquo;</div><div class="b" style="left:599px;top:232px;width:16px;height:374px;background:#f0f0f0;"></div><svg class="b" style="left:603px;top:239px;" width="8" height="6" viewBox="0 0 8 6"><path d="M0.700 5L4 1.500L7.300 5" fill="none" stroke="#3c3c3c" stroke-width="2"/></svg><svg class="b" style="left:603px;top:595px;" width="8" height="6" viewBox="0 0 8 6"><path d="M0.700 1L4 4.500L7.300 1" fill="none" stroke="#3c3c3c" stroke-width="2"/></svg><div class="b" style="left:599px;top:469px;width:16px;height:52px;background:#cdcdcd;"></div><div class="b" style="left:306px;top:257px;width:293px;height:349px;overflow:hidden;"><div class="b" style="left:-306px;top:-257px;width:10px;height:10px;"><div class="b" style="left:327px;top:261px;width:90px;height:90px;box-shadow:1px 1px 2px rgba(0,0,0,.45);"><svg class="b" style="left:0;top:0" width="90" height="90" viewBox="0 0 90 90"><defs><radialGradient id="mg2" cx=".42" cy=".38" r=".62"><stop offset="0" stop-color="#d4aa74"/><stop offset=".5" stop-color="#c09058"/><stop offset=".8" stop-color="#a07040"/><stop offset="1" stop-color="#5a3a20"/></radialGradient>
<clipPath id="mg2c"><circle cx="45" cy="45" r="44.5"/></clipPath><filter id="bl3" x="-50%" y="-50%" width="200%" height="200%"><feGaussianBlur stdDeviation="2.5"/></filter><filter id="bl1" x="-50%" y="-50%" width="200%" height="200%"><feGaussianBlur stdDeviation="1.2"/></filter>
<filter id="tx2"><feTurbulence type="fractalNoise" baseFrequency=".09" numOctaves="3" seed="4"/><feColorMatrix values="0 0 0 0 .35  0 0 0 0 .22  0 0 0 0 .1  .9 .3 0 0 -.45"/></filter></defs><rect width="90" height="90" fill="#000"/><circle cx="45" cy="45" r="44.5" fill="url(#mg2)"/>
<g clip-path="url(#mg2c)"><rect width="90" height="90" filter="url(#tx2)" opacity=".55"/>
<g filter="url(#bl3)"><ellipse cx="21" cy="44" rx="14" ry="5" fill="#7c7670" opacity=".8" transform="rotate(-12 21 44)"/><ellipse cx="36" cy="40" rx="8" ry="3" fill="#8c7a68" opacity=".6"/>
<ellipse cx="52" cy="7" rx="10" ry="3" fill="#74685e" opacity=".75"/><ellipse cx="42" cy="88" rx="30" ry="6" fill="#5c5654" opacity=".75"/>
<ellipse cx="60" cy="30" rx="14" ry="12" fill="#dcb888" opacity=".5"/></g></g></svg></div><div class="b" style="left:465px;top:261px;width:90px;height:90px;box-shadow:1px 1px 2px rgba(0,0,0,.45);"><svg class="b" style="left:0;top:0" width="90" height="90" viewBox="0 0 90 90"><defs><radialGradient id="mg3" cx=".36" cy=".4" r=".64"><stop offset="0" stop-color="#d8ac70"/><stop offset=".55" stop-color="#c89858"/><stop offset=".85" stop-color="#a87844"/><stop offset="1" stop-color="#6a4828"/></radialGradient>
<clipPath id="mg3c"><circle cx="45" cy="45" r="44.5"/></clipPath>
<filter id="tx3"><feTurbulence type="fractalNoise" baseFrequency=".07" numOctaves="4" seed="11"/><feColorMatrix values="0 0 0 0 .12  0 0 0 0 .17  0 0 0 0 .28  1.6 .6 0 0 -.95"/></filter></defs><rect width="90" height="90" fill="#000"/><circle cx="45" cy="45" r="44.5" fill="url(#mg3)"/>
<g clip-path="url(#mg3c)">
<g filter="url(#bl3)"><path d="M54 5C70 6 84 20 87 36C89 54 80 68 70 74C62 68 60 60 50 56C40 50 44 40 50 30C54 20 48 10 54 5z" fill="#1a263c" opacity=".96"/>
<ellipse cx="46" cy="50" rx="9" ry="8" fill="#2e3a50" opacity=".8"/><ellipse cx="64" cy="62" rx="12" ry="10" fill="#263248" opacity=".85"/><ellipse cx="56" cy="36" rx="8" ry="10" fill="#3a4458" opacity=".6"/>
<ellipse cx="8" cy="54" rx="7" ry="4" fill="#44506a" opacity=".85" transform="rotate(30 8 54)"/><ellipse cx="47" cy="69" rx="5" ry="3" fill="#3c4860" opacity=".85"/><ellipse cx="60" cy="80" rx="14" ry="4" fill="#56586a" opacity=".6"/>
<ellipse cx="62" cy="87" rx="14" ry="2.500" fill="#e8e4dc" opacity=".7"/></g>
<rect width="90" height="90" filter="url(#tx3)" opacity=".3"/></g></svg></div><div class="t c" style="left:312px;top:355px;width:120px;color:#000;">marsglobe2.jpg</div><div class="t c" style="left:450px;top:355px;width:120px;color:#000;">marsglobe3.jpg</div><div class="b" style="left:336px;top:378px;width:72px;height:90px;box-shadow:1px 1px 2px rgba(0,0,0,.45);"><svg class="b" style="left:0;top:0" width="72" height="90" viewBox="0 0 72 90"><defs><linearGradient id="ig" x1="0" y1="0" x2="1" y2="1"><stop offset="0" stop-color="#b0b0b0"/><stop offset=".5" stop-color="#8c8c8c"/><stop offset="1" stop-color="#6a6a6a"/></linearGradient>
<filter id="txi"><feTurbulence type="fractalNoise" baseFrequency=".06 .09" numOctaves="4" seed="7"/><feColorMatrix values="0 0 0 0 .5  0 0 0 0 .5  0 0 0 0 .5  0 0 0 0 1"/><feComponentTransfer><feFuncR type="linear" slope="2.6" intercept="-.75"/><feFuncG type="linear" slope="2.6" intercept="-.75"/><feFuncB type="linear" slope="2.6" intercept="-.75"/></feComponentTransfer></filter>
<filter id="txi2"><feTurbulence type="fractalNoise" baseFrequency=".09 .13" numOctaves="4" seed="7"/><feColorMatrix values="1.5 0 0 0 -.22  1.5 0 0 0 -.22  1.5 0 0 0 -.22  0 0 0 0 1"/></filter></defs><rect width="72" height="90" fill="url(#ig)"/><rect width="72" height="90" filter="url(#txi2)" opacity=".5"/>
<g filter="url(#bl1)" fill="none"><path d="M22 2C30 14 40 30 48 46C54 58 62 70 70 82" stroke="#2c2c2c" stroke-width="2.400" opacity=".9"/><path d="M30 2C38 16 46 30 54 46C60 58 66 66 72 74" stroke="#d8d8d8" stroke-width="2" opacity=".8"/>
<path d="M38 14C44 24 50 34 56 44C60 52 66 58 71 62" stroke="#444" stroke-width="1.800" opacity=".8"/><path d="M34 22L44 18M38 30L48 26M42 38L52 34M46 46L56 42M50 54L60 50M54 62L64 58" stroke="#484848" stroke-width="1.500" opacity=".8"/>
<path d="M4 40C14 36 24 44 30 52M8 60C18 58 30 64 40 74M2 78C12 74 22 80 30 88" stroke="#6a6a6a" stroke-width="1.500" opacity=".7"/><path d="M6 42C16 39 24 47 30 55M10 63C20 61 30 67 40 77" stroke="#d0d0d0" stroke-width="1.200" opacity=".7"/></g></svg></div><div class="b" style="left:465px;top:385px;width:90px;height:83px;box-shadow:1px 1px 2px rgba(0,0,0,.45);"><svg class="b" style="left:0;top:0" width="90" height="83" viewBox="0 0 90 83"><defs><linearGradient id="og" x1="0" y1="0" x2="1" y2=".25"><stop offset="0" stop-color="#847c6c"/><stop offset=".5" stop-color="#9e927a"/><stop offset="1" stop-color="#b09872"/></linearGradient>
<radialGradient id="oc" cx=".56" cy=".54" r=".5"><stop offset="0" stop-color="#3c2c1e"/><stop offset=".35" stop-color="#54402a"/><stop offset=".62" stop-color="#8a7658"/><stop offset=".85" stop-color="#a69880"/><stop offset="1" stop-color="#a69880" stop-opacity="0"/></radialGradient></defs><rect width="90" height="83" fill="url(#og)"/>
<g filter="url(#bl3)"><path d="M0 56C4 66 8 74 14 83H0z" fill="#141414"/><path d="M20 83C40 76 64 76 90 70V83z" fill="#4a4c52" opacity=".85"/><path d="M0 30L10 44L0 52z" fill="#6a6860" opacity=".7"/><path d="M60 60C70 58 80 52 90 50V68C80 70 70 70 60 72z" fill="#c4ac84" opacity=".6"/></g>
<ellipse cx="44" cy="43" rx="29" ry="27" fill="url(#oc)"/>
<path d="M18 46C16 34 22 24 31 21C34 16 44 18 48 17C58 15 64 22 66 26C71 34 70 42 69 50C66 60 58 66 48 68C38 69 30 66 25 60C21 56 19 51 18 46z" fill="none" stroke="#d8cebc" stroke-width="1.300" opacity=".9"/>
<ellipse cx="48" cy="45" rx="3" ry="2.500" fill="#8a7458" stroke="#2a1c10" stroke-width=".8"/></svg></div><div class="t c" style="left:313px;top:472px;width:120px;color:#000;">mr9_inca_city.jpg</div><div class="t c" style="left:451px;top:472px;width:120px;color:#000;">olympus_mons.j</div><div class="t c" style="left:451px;top:487px;width:120px;color:#000;">pg</div><div class="b" style="left:459px;top:506px;width:105px;height:110px;background:#d9d9d9;"></div><div class="b" style="left:336px;top:510px;width:72px;height:90px;box-shadow:1px 1px 2px rgba(0,0,0,.45);"><svg class="b" style="left:0;top:0" width="72" height="90" viewBox="0 0 72 90"><defs><linearGradient id="vg" x1=".95" y1="0" x2=".1" y2="1"><stop offset="0" stop-color="#c08658"/><stop offset=".35" stop-color="#9a5628"/><stop offset=".7" stop-color="#6a3416"/><stop offset="1" stop-color="#32140a"/></linearGradient>
<filter id="txv"><feTurbulence type="fractalNoise" baseFrequency=".08" numOctaves="3" seed="3"/><feColorMatrix values="0 0 0 0 .12  0 0 0 0 .05  0 0 0 0 .02  1.4 .4 0 0 -.8"/></filter>
<clipPath id="vc"><path d="M32 0H72V44H61V56H52V66H42V74H32V90H10V84H0V32H9V20H20V10H32z"/></clipPath></defs><rect width="72" height="90" fill="#160a06"/><path d="M32 0H72V44H61V56H52V66H42V74H32V90H10V84H0V32H9V20H20V10H32z" fill="url(#vg)"/>
<g clip-path="url(#vc)"><rect width="72" height="90" filter="url(#txv)" opacity=".7"/>
<g filter="url(#bl1)"><path d="M56 0C62 2 68 8 72 14V0z" fill="#4a220e" opacity=".8"/><path d="M21 11L18 22L10 24L10 34L16 40L26 46L30 52" fill="none" stroke="#f8ecd8" stroke-width="2"/><path d="M33 2L36 8L40 14L38 24" fill="none" stroke="#f0dcc0" stroke-width="1.500" opacity=".9"/><path d="M33 3H46L52 8" fill="none" stroke="#e0c098" stroke-width="1.400" opacity=".8"/></g></g></svg></div><div class="b" style="left:470px;top:510px;width:79px;height:90px;box-shadow:1px 1px 2px rgba(0,0,0,.45);"><svg class="b" style="left:0;top:0" width="79" height="90" viewBox="0 0 79 90"><defs><radialGradient id="pg" cx=".4" cy=".4" r=".7"><stop offset="0" stop-color="#f6f6f6"/><stop offset=".5" stop-color="#d4d4d4"/><stop offset="1" stop-color="#6e6e6e"/></radialGradient>
<filter id="txp"><feTurbulence type="fractalNoise" baseFrequency=".12" numOctaves="3" seed="9"/><feColorMatrix values="0 0 0 0 .3  0 0 0 0 .3  0 0 0 0 .3  1.3 .4 0 0 -.8"/></filter>
<clipPath id="pc"><path d="M10 40C12 26 24 14 40 6C54 0 70 0 80 4V76C76 84 66 90 54 88C40 86 22 76 14 62C10 54 9 46 10 40z"/></clipPath></defs><rect width="79" height="90" fill="#000"/><path d="M10 40C12 26 24 14 40 6C54 0 70 0 80 4V76C76 84 66 90 54 88C40 86 22 76 14 62C10 54 9 46 10 40z" fill="url(#pg)"/>
<g clip-path="url(#pc)"><rect width="79" height="90" filter="url(#txp)" opacity=".5"/><g filter="url(#bl1)"><path d="M52 86C62 76 74 76 80 80V90H52z" fill="#080808"/><path d="M62 70C70 66 76 68 80 70" stroke="#777" stroke-width="2" fill="none"/></g></g></svg></div></div></div><div class="t" style="left:11px;top:611px;color:#555;">Log</div><div class="t" style="left:17px;top:635px;color:#555;">33 items</div><div class="t" style="left:82px;top:635px;color:#555;letter-spacing:-0.25px;">1 item selected&nbsp; 37.2 KB</div><div class="b" style="left:589px;top:631px;width:22px;height:23px;background:#96bfe0;"></div><svg class="b" style="left:570px;top:635px;" width="16" height="13" viewBox="0 0 16 13"><rect x="0.500" y="0.5" width="4" height="4" fill="none" stroke="#2a7fd0"/><rect x="2" y="2" width="1" height="1" fill="#2a7fd0"/><rect x="6" y="2" width="4" height="1" fill="#2a7fd0"/><rect x="12" y="2" width="4" height="1" fill="#2a7fd0"/><rect x="0.500" y="4.5" width="4" height="4" fill="none" stroke="#2a7fd0"/><rect x="2" y="6" width="1" height="1" fill="#2a7fd0"/><rect x="6" y="6" width="4" height="1" fill="#2a7fd0"/><rect x="12" y="6" width="4" height="1" fill="#2a7fd0"/><rect x="0.500" y="8.5" width="4" height="4" fill="none" stroke="#2a7fd0"/><rect x="2" y="10" width="1" height="1" fill="#2a7fd0"/><rect x="6" y="10" width="4" height="1" fill="#2a7fd0"/><rect x="12" y="10" width="4" height="1" fill="#2a7fd0"/></svg><svg class="b" style="left:593px;top:636px;" width="14" height="11" viewBox="0 0 14 11"><rect x="0.500" y="0.500" width="13" height="10" fill="none" stroke="#2a7fd0"/><rect x="2" y="2" width="10" height="7" fill="#2e86d6"/></svg>
<svg class="b" style="left:624px;top:330px;" width="13" height="11" viewBox="0 0 13 11"><path d="M0 3.500h7.500L5 0.500h3.500L13 5.500L8.500 10.500H5L7.500 7.500H0z" fill="#2e86d6"/></svg><svg class="b" style="left:624px;top:352px;" width="13" height="11" viewBox="0 0 13 11"><path d="M0 3.500h7.500L5 0.500h3.500L13 5.500L8.500 10.500H5L7.500 7.500H0z" fill="#c9c9c9" transform="translate(13 0) scale(-1 1)"/></svg><div class="b" style="left:619px;top:370px;width:22px;height:1px;background:#dcdcdc;"></div><svg class="b" style="left:624px;top:378px;" width="13" height="11" viewBox="0 0 13 11"><path d="M0 3.500h7.500L5 0.500h3.500L13 5.500L8.500 10.500H5L7.500 7.500H0z" fill="#c4000f"/></svg><svg class="b" style="left:624px;top:401px;" width="13" height="11" viewBox="0 0 13 11"><path d="M0 3.500h7.500L5 0.500h3.500L13 5.500L8.500 10.500H5L7.500 7.500H0z" fill="#b4b4b4" transform="translate(13 0) scale(-1 1)"/></svg><svg class="b" style="left:625px;top:441px;" width="13" height="16" viewBox="0 0 13 16"><rect x="0.5" y="0.5" width="12" height="15" fill="#ffe493" stroke="#f2cd62"/><rect x="1.5" y="1.5" width="5" height="13" fill="#ffebae" opacity="0.6"/><rect x="10.500" y="9" width="2" height="6.500" fill="#fff0be"/><path d="M10.500 15.500V9h2.500" fill="none" stroke="#f0c654" stroke-width="1"/><rect x="0.500" y="0.500" width="12" height="15" fill="none" stroke="#f2cd62"/></svg><svg class="b" style="left:621px;top:450px;" width="9" height="9" viewBox="0 0 9 9"><path d="M7.500 3A3.300 3.300 0 0 0 1.500 3.500M1.500 6A3.300 3.300 0 0 0 7.500 5.500" fill="none" stroke="#2aa12a" stroke-width="1.700"/><path d="M0 2.500h3.500L1.500 5.500zM9 6.500H5.500L7.500 3.500z" fill="#2aa12a"/></svg><div class="b" style="left:619px;top:463px;width:22px;height:1px;background:#dcdcdc;"></div><svg class="b" style="left:624px;top:469px;" width="14" height="17" viewBox="0 0 14 17"><rect x="0.500" y="0.500" width="12" height="15" fill="#ffe493" stroke="#f2cd62"/><rect x="4" y="10.500" width="10" height="6.500" fill="#fff"/><path d="M6.500 12h2a1.700 1.700 0 0 1 0 3.400h-2a1.700 1.700 0 0 1 0-3.400zM9.500 12h2a1.700 1.700 0 0 1 0 3.400h-2" fill="none" stroke="#2e86d6" stroke-width="1.200"/></svg><div class="b" style="left:619px;top:490px;width:22px;height:1px;background:#dcdcdc;"></div><svg class="b" style="left:622px;top:495px;" width="16" height="16" viewBox="0 0 16 16"><rect x="0.500" y="0.500" width="11" height="10" fill="#fff" stroke="#3a6ea5"/><rect x="0.500" y="0.500" width="11" height="2.500" fill="#2e86d6"/><rect x="4.500" y="5.500" width="11" height="10" fill="#fff" stroke="#555"/><path d="M6.500 8.500h7" stroke="#2e86d6"/><path d="M6.500 10.500h7" stroke="#d8121b"/><path d="M6.500 12.500h7" stroke="#2aa12a"/></svg>
<div class="b" style="left:644px;top:204px;width:614px;height:451px;border:1px solid #0072c6;background:#fff;"></div><div class="b" style="left:644px;top:184px;width:85px;height:21px;background:#0072c6;"></div><svg class="b" style="left:651px;top:186px;" width="13" height="16" viewBox="0 0 13 16"><rect x="0.5" y="0.5" width="12" height="15" fill="#ffe493" stroke="#f2cd62"/><rect x="1.5" y="1.5" width="5" height="13" fill="#ffebae" opacity="0.6"/><rect x="10.500" y="9" width="2" height="6.500" fill="#fff0be"/><path d="M10.500 15.500V9h2.500" fill="none" stroke="#f0c654" stroke-width="1"/><rect x="0.500" y="0.500" width="12" height="15" fill="none" stroke="#f2cd62"/></svg><div class="t w" style="left:668px;top:186px;letter-spacing:-0.15px;">Flowers</div><svg class="b" style="left:715px;top:190px;" width="9" height="9" viewBox="0 0 9 9"><path d="M0.500 0.500l8 8M8.500 0.500l-8 8" stroke="#fff" stroke-width="1.400"/></svg><svg class="b" style="left:1221px;top:188px;" width="6" height="9" viewBox="0 0 6 9"><path d="M5.500 0.700V8.300L0.800 4.500z" fill="#fff" stroke="#777" stroke-width="0.900"/></svg><svg class="b" style="left:1235px;top:188px;" width="6" height="9" viewBox="0 0 6 9"><path d="M0.500 0.700V8.300L5.200 4.500z" fill="#fff" stroke="#777" stroke-width="0.900"/></svg><svg class="b" style="left:1247px;top:192px;" width="10" height="5" viewBox="0 0 10 5"><path d="M0 0h10l-5 5z" fill="#666"/></svg><svg class="b" style="left:648px;top:210px;" width="3" height="17" viewBox="0 0 3 17"><rect x="0" y="0" width="3" height="1" fill="#b9b9b9"/><rect x="0" y="2" width="3" height="1" fill="#b9b9b9"/><rect x="0" y="4" width="3" height="1" fill="#b9b9b9"/><rect x="0" y="6" width="3" height="1" fill="#b9b9b9"/><rect x="0" y="8" width="3" height="1" fill="#b9b9b9"/><rect x="0" y="10" width="3" height="1" fill="#b9b9b9"/><rect x="0" y="12" width="3" height="1" fill="#b9b9b9"/><rect x="0" y="14" width="3" height="1" fill="#b9b9b9"/><rect x="0" y="16" width="3" height="1" fill="#b9b9b9"/></svg><svg class="b" style="left:658px;top:213px;" width="13" height="11" viewBox="0 0 13 11"><path d="M12.500 5.500H1.500M6 1L1.500 5.500L6 10" fill="none" stroke="#555" stroke-width="1.500"/></svg><svg class="b" style="left:678px;top:217px;" width="5" height="3" viewBox="0 0 5 3"><path d="M0 0h5l-2.5 3z" fill="#666"/></svg><svg class="b" style="left:691px;top:213px;" width="13" height="11" viewBox="0 0 13 11"><path d="M0.500 5.500H11.500M7 1L11.500 5.500L7 10" fill="none" stroke="#c3c3c3" stroke-width="1.500"/></svg><svg class="b" style="left:711px;top:217px;" width="5" height="3" viewBox="0 0 5 3"><path d="M0 0h5l-2.5 3z" fill="#9a9a9a"/></svg><svg class="b" style="left:724px;top:211px;" width="13" height="14" viewBox="0 0 13 14"><path d="M6.500 13.500V1.500M1.500 6.500L6.500 1.500L11.500 6.500" fill="none" stroke="#555" stroke-width="1.500"/></svg><div class="b inp" style="left:741px;top:206px;width:248px;height:24px;"></div><svg class="b" style="left:746px;top:210px;" width="13" height="16" viewBox="0 0 13 16"><rect x="0.5" y="0.5" width="12" height="15" fill="#ffe493" stroke="#f2cd62"/><rect x="1.5" y="1.5" width="5" height="13" fill="#ffebae" opacity="0.6"/><rect x="10.500" y="9" width="2" height="6.500" fill="#fff0be"/><path d="M10.500 15.500V9h2.500" fill="none" stroke="#f0c654" stroke-width="1"/><rect x="0.500" y="0.500" width="12" height="15" fill="none" stroke="#f2cd62"/></svg><div class="t" style="left:764px;top:210px;color:#444;">&laquo;</div><div class="t" style="left:778px;top:211px;color:#222;">Web</div><svg class="b" style="left:809px;top:215px;" width="4" height="7" viewBox="0 0 4 7"><path d="M0 0L4 3.500L0 7z" fill="#444"/></svg><div class="t" style="left:821px;top:211px;color:#222;">Wallpaper</div><svg class="b" style="left:882px;top:215px;" width="4" height="7" viewBox="0 0 4 7"><path d="M0 0L4 3.500L0 7z" fill="#444"/></svg><div class="t" style="left:894px;top:211px;color:#222;">Flowers</div><svg class="b" style="left:954px;top:217px;" width="5" height="3" viewBox="0 0 5 3"><path d="M0 0h5l-2.5 3z" fill="#555"/></svg><svg class="b" style="left:971px;top:212px;" width="12" height="13" viewBox="0 0 12 13"><path d="M9.800 3.600A4.800 4.800 0 1 0 11 7.800" fill="none" stroke="#555" stroke-width="1.400"/><path d="M6.800 0.300L10.600 3.800L6.200 5z" fill="#555"/></svg><div class="b" style="left:645px;top:231px;width:612px;height:1px;background:#e3e3e3;"></div><svg class="b" style="left:994px;top:210px;" width="14" height="17" viewBox="0 0 14 17"><rect x="0.500" y="0.500" width="12" height="15" fill="#ffe493" stroke="#f2cd62"/><rect x="4" y="10.500" width="10" height="6.500" fill="#fff"/><path d="M6.500 12h2a1.700 1.700 0 0 1 0 3.400h-2a1.700 1.700 0 0 1 0-3.400zM9.500 12h2a1.700 1.700 0 0 1 0 3.400h-2" fill="none" stroke="#2e86d6" stroke-width="1.200"/></svg><svg class="b" style="left:1011px;top:217px;" width="5" height="3" viewBox="0 0 5 3"><path d="M0 0h5l-2.5 3z" fill="#666"/></svg><svg class="b" style="left:1023px;top:223px;" width="5" height="3" viewBox="0 0 5 3"><path d="M0 0h5l-2.5 3z" fill="#555"/></svg><svg class="b" style="left:1035px;top:210px;" width="3" height="17" viewBox="0 0 3 17"><rect x="0" y="0" width="3" height="1" fill="#b9b9b9"/><rect x="0" y="2" width="3" height="1" fill="#b9b9b9"/><rect x="0" y="4" width="3" height="1" fill="#b9b9b9"/><rect x="0" y="6" width="3" height="1" fill="#b9b9b9"/><rect x="0" y="8" width="3" height="1" fill="#b9b9b9"/><rect x="0" y="10" width="3" height="1" fill="#b9b9b9"/><rect x="0" y="12" width="3" height="1" fill="#b9b9b9"/><rect x="0" y="14" width="3" height="1" fill="#b9b9b9"/><rect x="0" y="16" width="3" height="1" fill="#b9b9b9"/></svg><div class="b inp" style="left:1041px;top:209px;width:203px;height:20px;"></div><div class="t" style="left:1050px;top:211px;color:#6d6d6d;letter-spacing:-0.3px;">Search Flowers</div><svg class="b" style="left:1223px;top:213px;" width="12" height="12" viewBox="0 0 12 12"><circle cx="7" cy="5" r="3.700" fill="none" stroke="#555" stroke-width="1.500"/><path d="M4.300 7.700L0.800 11.200" stroke="#555" stroke-width="1.800"/></svg><svg class="b" style="left:1248px;top:223px;" width="5" height="3" viewBox="0 0 5 3"><path d="M0 0h5l-2.5 3z" fill="#555"/></svg><div class="t" style="left:650px;top:236px;font-size:15px;line-height:18px;height:18px;color:#1b6ec2;">Folders</div><svg class="b" style="left:895.5px;top:243px;" width="10" height="5" viewBox="0 0 10 5"><path d="M0 0h10l-5 5z" fill="#555"/></svg><svg class="b" style="left:911.5px;top:239px;" width="9" height="11" viewBox="0 0 9 11"><path d="M1.500 0.700h6M2.500 0.500v5M6.500 0.500v5M0 5.500h9M4.500 5.500v5.500" fill="none" stroke="#666" stroke-width="1.500"/><rect x="3" y="0.500" width="3" height="5" fill="#666"/></svg><svg class="b" style="left:927.5px;top:239.5px;" width="9" height="9" viewBox="0 0 9 9"><path d="M1 1l7 7M8 1l-7 7" stroke="#666" stroke-width="2.200"/></svg><div class="b" style="left:645px;top:257px;width:283px;height:374px;overflow:hidden;"><div class="b" style="left:-645px;top:-257px;width:10px;height:10px;"><svg class="b" style="left:684.5px;top:264px;" width="6" height="10" viewBox="0 0 6 10"><path d="M0.700 0.800L5 5L0.700 9.200z" fill="#fff" stroke="#3c3c3c" stroke-width="1"/></svg><svg class="b" style="left:696.5px;top:261px;" width="13" height="16" viewBox="0 0 13 16"><rect x="0.5" y="0.5" width="12" height="15" fill="#ffe493" stroke="#f2cd62"/><rect x="1.5" y="1.5" width="5" height="13" fill="#ffebae" opacity="0.6"/><rect x="10.500" y="9" width="2" height="6.500" fill="#fff0be"/><path d="M10.500 15.500V9h2.500" fill="none" stroke="#f0c654" stroke-width="1"/><rect x="0.500" y="0.500" width="12" height="15" fill="none" stroke="#f2cd62"/></svg><div class="t" style="left:712.5px;top:261px;color:#222;">twain_64</div><svg class="b" style="left:696.5px;top:285px;" width="13" height="16" viewBox="0 0 13 16"><rect x="0.5" y="0.5" width="12" height="15" fill="#ffe493" stroke="#f2cd62"/><rect x="1.5" y="1.5" width="5" height="13" fill="#ffebae" opacity="0.6"/><rect x="10.500" y="9" width="2" height="6.500" fill="#fff0be"/><path d="M10.500 15.500V9h2.500" fill="none" stroke="#f0c654" stroke-width="1"/><rect x="0.500" y="0.500" width="12" height="15" fill="none" stroke="#f2cd62"/></svg><div class="t" style="left:712.5px;top:285px;color:#222;">vpnplugins</div><svg class="b" style="left:684.5px;top:312px;" width="6" height="10" viewBox="0 0 6 10"><path d="M0.700 0.800L5 5L0.700 9.200z" fill="#fff" stroke="#3c3c3c" stroke-width="1"/></svg><svg class="b" style="left:696.5px;top:309px;" width="13" height="16" viewBox="0 0 13 16"><rect x="0.5" y="0.5" width="12" height="15" fill="#ffe493" stroke="#f2cd62"/><rect x="1.5" y="1.5" width="5" height="13" fill="#ffebae" opacity="0.6"/><rect x="10.500" y="9" width="2" height="6.500" fill="#fff0be"/><path d="M10.500 15.500V9h2.500" fill="none" stroke="#f0c654" stroke-width="1"/><rect x="0.500" y="0.500" width="12" height="15" fill="none" stroke="#f2cd62"/></svg><div class="t" style="left:712.5px;top:309px;color:#222;">Vss</div><svg class="b" style="left:683.5px;top:338px;" width="7" height="7" viewBox="0 0 7 7"><path d="M6.500 0V6.500H0z" fill="#333"/></svg><svg class="b" style="left:696.5px;top:333px;" width="13" height="16" viewBox="0 0 13 16"><rect x="0.5" y="0.5" width="12" height="15" fill="#ffe493" stroke="#f2cd62"/><rect x="1.5" y="1.5" width="5" height="13" fill="#ffebae" opacity="0.6"/><rect x="10.500" y="9" width="2" height="6.500" fill="#fff0be"/><path d="M10.500 15.500V9h2.500" fill="none" stroke="#f0c654" stroke-width="1"/><rect x="0.500" y="0.500" width="12" height="15" fill="none" stroke="#f2cd62"/></svg><div class="t" style="left:712.5px;top:333px;color:#222;">Web</div><svg class="b" style="left:692.5px;top:360px;" width="6" height="10" viewBox="0 0 6 10"><path d="M0.700 0.800L5 5L0.700 9.200z" fill="#fff" stroke="#3c3c3c" stroke-width="1"/></svg><svg class="b" style="left:704.5px;top:357px;" width="13" height="16" viewBox="0 0 13 16"><rect x="0.5" y="0.5" width="12" height="15" fill="#ffe493" stroke="#f2cd62"/><rect x="1.5" y="1.5" width="5" height="13" fill="#ffebae" opacity="0.6"/><rect x="10.500" y="9" width="2" height="6.500" fill="#fff0be"/><path d="M10.500 15.500V9h2.500" fill="none" stroke="#f0c654" stroke-width="1"/><rect x="0.500" y="0.500" width="12" height="15" fill="none" stroke="#f2cd62"/></svg><div class="t" style="left:720.5px;top:357px;color:#222;">4K</div><svg class="b" style="left:704.5px;top:381px;" width="13" height="16" viewBox="0 0 13 16"><rect x="0.5" y="0.5" width="12" height="15" fill="#ffe493" stroke="#f2cd62"/><rect x="1.5" y="1.5" width="5" height="13" fill="#ffebae" opacity="0.6"/><rect x="10.500" y="9" width="2" height="6.500" fill="#fff0be"/><path d="M10.500 15.500V9h2.500" fill="none" stroke="#f0c654" stroke-width="1"/><rect x="0.500" y="0.500" width="12" height="15" fill="none" stroke="#f2cd62"/></svg><div class="t" style="left:720.5px;top:381px;color:#222;">Screen</div><svg class="b" style="left:691.5px;top:410px;" width="7" height="7" viewBox="0 0 7 7"><path d="M6.500 0V6.500H0z" fill="#333"/></svg><svg class="b" style="left:704.5px;top:405px;" width="13" height="16" viewBox="0 0 13 16"><rect x="0.5" y="0.5" width="12" height="15" fill="#ffe493" stroke="#f2cd62"/><rect x="1.5" y="1.5" width="5" height="13" fill="#ffebae" opacity="0.6"/><rect x="10.500" y="9" width="2" height="6.500" fill="#fff0be"/><path d="M10.500 15.500V9h2.500" fill="none" stroke="#f0c654" stroke-width="1"/><rect x="0.500" y="0.500" width="12" height="15" fill="none" stroke="#f2cd62"/></svg><div class="t" style="left:720.5px;top:405px;color:#222;">Wallpaper</div><svg class="b" style="left:712.5px;top:429px;" width="13" height="16" viewBox="0 0 13 16"><rect x="0.5" y="0.5" width="12" height="15" fill="#ffe493" stroke="#f2cd62"/><rect x="1.5" y="1.5" width="5" height="13" fill="#ffebae" opacity="0.6"/><rect x="10.500" y="9" width="2" height="6.500" fill="#fff0be"/><path d="M10.500 15.500V9h2.500" fill="none" stroke="#f0c654" stroke-width="1"/><rect x="0.500" y="0.500" width="12" height="15" fill="none" stroke="#f2cd62"/></svg><div class="t" style="left:728.5px;top:429px;color:#222;">Architecture</div><svg class="b" style="left:712.5px;top:453px;" width="13" height="16" viewBox="0 0 13 16"><rect x="0.5" y="0.5" width="12" height="15" fill="#ffe493" stroke="#f2cd62"/><rect x="1.5" y="1.5" width="5" height="13" fill="#ffebae" opacity="0.6"/><rect x="10.500" y="9" width="2" height="6.500" fill="#fff0be"/><path d="M10.500 15.500V9h2.500" fill="none" stroke="#f0c654" stroke-width="1"/><rect x="0.500" y="0.500" width="12" height="15" fill="none" stroke="#f2cd62"/></svg><div class="t" style="left:728.5px;top:453px;color:#222;">Characters</div><div class="b" style="left:645px;top:473px;width:283px;height:24px;background:#e5e5e5;"></div><svg class="b" style="left:712.5px;top:477px;" width="13" height="16" viewBox="0 0 13 16"><rect x="0.5" y="0.5" width="12" height="15" fill="#ffe493" stroke="#f2cd62"/><rect x="1.5" y="1.5" width="5" height="13" fill="#ffebae" opacity="0.6"/><rect x="10.500" y="9" width="2" height="6.500" fill="#fff0be"/><path d="M10.500 15.500V9h2.500" fill="none" stroke="#f0c654" stroke-width="1"/><rect x="0.500" y="0.500" width="12" height="15" fill="none" stroke="#f2cd62"/></svg><div class="t" style="left:728.5px;top:477px;color:#222;">Flowers</div><svg class="b" style="left:712.5px;top:501px;" width="13" height="16" viewBox="0 0 13 16"><rect x="0.5" y="0.5" width="12" height="15" fill="#ffe493" stroke="#f2cd62"/><rect x="1.5" y="1.5" width="5" height="13" fill="#ffebae" opacity="0.6"/><rect x="10.500" y="9" width="2" height="6.500" fill="#fff0be"/><path d="M10.500 15.500V9h2.500" fill="none" stroke="#f0c654" stroke-width="1"/><rect x="0.500" y="0.500" width="12" height="15" fill="none" stroke="#f2cd62"/></svg><div class="t" style="left:728.5px;top:501px;color:#222;">Landscapes</div><svg class="b" style="left:712.5px;top:525px;" width="13" height="16" viewBox="0 0 13 16"><rect x="0.5" y="0.5" width="12" height="15" fill="#ffe493" stroke="#f2cd62"/><rect x="1.5" y="1.5" width="5" height="13" fill="#ffebae" opacity="0.6"/><rect x="10.500" y="9" width="2" height="6.500" fill="#fff0be"/><path d="M10.500 15.500V9h2.500" fill="none" stroke="#f0c654" stroke-width="1"/><rect x="0.500" y="0.500" width="12" height="15" fill="none" stroke="#f2cd62"/></svg><div class="t" style="left:728.5px;top:525px;color:#222;">Nature</div><svg class="b" style="left:712.5px;top:549px;" width="13" height="16" viewBox="0 0 13 16"><rect x="0.5" y="0.5" width="12" height="15" fill="#ffe493" stroke="#f2cd62"/><rect x="1.5" y="1.5" width="5" height="13" fill="#ffebae" opacity="0.6"/><rect x="10.500" y="9" width="2" height="6.500" fill="#fff0be"/><path d="M10.500 15.500V9h2.500" fill="none" stroke="#f0c654" stroke-width="1"/><rect x="0.500" y="0.500" width="12" height="15" fill="none" stroke="#f2cd62"/></svg><div class="t" style="left:728.5px;top:549px;color:#222;">Scenes</div><svg class="b" style="left:712.5px;top:573px;" width="13" height="16" viewBox="0 0 13 16"><rect x="0.5" y="0.5" width="12" height="15" fill="#ffe493" stroke="#f2cd62"/><rect x="1.5" y="1.5" width="5" height="13" fill="#ffebae" opacity="0.6"/><rect x="10.500" y="9" width="2" height="6.500" fill="#fff0be"/><path d="M10.500 15.500V9h2.500" fill="none" stroke="#f0c654" stroke-width="1"/><rect x="0.500" y="0.500" width="12" height="15" fill="none" stroke="#f2cd62"/></svg><div class="t" style="left:728.5px;top:573px;color:#222;">Windows</div><svg class="b" style="left:712.5px;top:597px;" width="13" height="16" viewBox="0 0 13 16"><rect x="0.5" y="0.5" width="12" height="15" fill="#ffe493" stroke="#f2cd62"/><rect x="1.5" y="1.5" width="5" height="13" fill="#ffebae" opacity="0.6"/><rect x="10.500" y="9" width="2" height="6.500" fill="#fff0be"/><path d="M10.500 15.500V9h2.500" fill="none" stroke="#f0c654" stroke-width="1"/><rect x="0.500" y="0.500" width="12" height="15" fill="none" stroke="#f2cd62"/></svg><div class="t" style="left:728.5px;top:597px;color:#222;">Windows 10</div><svg class="b" style="left:684.5px;top:624px;" width="6" height="10" viewBox="0 0 6 10"><path d="M0.700 0.800L5 5L0.700 9.200z" fill="#fff" stroke="#3c3c3c" stroke-width="1"/></svg><svg class="b" style="left:696.5px;top:621px;" width="13" height="16" viewBox="0 0 13 16"><rect x="0.5" y="0.5" width="12" height="15" fill="#ffe493" stroke="#f2cd62"/><rect x="1.5" y="1.5" width="5" height="13" fill="#ffebae" opacity="0.6"/><rect x="10.500" y="9" width="2" height="6.500" fill="#fff0be"/><path d="M10.500 15.500V9h2.500" fill="none" stroke="#f0c654" stroke-width="1"/><rect x="0.500" y="0.500" width="12" height="15" fill="none" stroke="#f2cd62"/></svg><div class="t" style="left:712.5px;top:621px;color:#222;">WinSxS</div></div></div><div class="b" style="left:928px;top:257px;width:17px;height:374px;background:#f0f0f0;"></div><div class="b" style="left:928px;top:257px;width:17px;height:17px;background:#fff;border:1px solid #a6a6a6;"></div><svg class="b" style="left:933px;top:263px;" width="7" height="4" viewBox="0 0 7 4"><path d="M0 4L3.500 0L7 4z" fill="#606060"/></svg><div class="b" style="left:928px;top:614px;width:17px;height:17px;background:#fff;border:1px solid #a6a6a6;"></div><svg class="b" style="left:933px;top:621px;" width="7" height="4" viewBox="0 0 7 4"><path d="M0 0L3.500 4L7 0z" fill="#606060"/></svg><div class="b" style="left:928px;top:547px;width:17px;height:25px;background:#fff;border:1px solid #a6a6a6;"></div><div class="b" style="left:947px;top:240px;width:1px;height:391px;background:#c8c8c8;"></div><div class="t" style="left:966px;top:237px;color:#4a5a78;">Name</div><div class="t" style="left:1035px;top:237px;color:#4a5a78;">Date</div><div class="t" style="left:1115px;top:237px;color:#4a5a78;">Type</div><svg class="b" style="left:990px;top:231px;" width="8" height="6" viewBox="0 0 8 6"><path d="M0.700 5L4 1.500L7.300 5" fill="none" stroke="#666" stroke-width="1.2"/></svg><div class="b" style="left:1028px;top:232px;width:1px;height:25px;background:#e5e5e5;"></div><div class="b" style="left:1108px;top:232px;width:1px;height:25px;background:#e5e5e5;"></div><div class="b" style="left:1188px;top:232px;width:1px;height:25px;background:#e5e5e5;"></div><div class="t" style="left:1226px;top:235px;color:#444;font-size:15px;">&raquo;</div><div class="b" style="left:1241px;top:232px;width:16px;height:340px;background:#f0f0f0;"></div><svg class="b" style="left:1245px;top:239px;" width="8" height="6" viewBox="0 0 8 6"><path d="M0.700 5L4 1.500L7.300 5" fill="none" stroke="#3c3c3c" stroke-width="2"/></svg><svg class="b" style="left:1245px;top:560px;" width="8" height="6" viewBox="0 0 8 6"><path d="M0.700 1L4 4.500L7.300 1" fill="none" stroke="#3c3c3c" stroke-width="2"/></svg><div class="b" style="left:1241px;top:284px;width:16px;height:269px;background:#cdcdcd;"></div><div class="b" style="left:969px;top:260px;width:90px;height:56px;box-shadow:1px 1px 2px rgba(0,0,0,.45);"><svg class="b" style="left:0;top:0" width="90" height="56" viewBox="0 0 90 56"><defs><linearGradient id="f7" x1="0" y1="0" x2="1" y2=".4"><stop offset="0" stop-color="#156f8c"/><stop offset=".45" stop-color="#2a98b0"/><stop offset=".8" stop-color="#48b0c0"/><stop offset="1" stop-color="#2a96ae"/></linearGradient></defs><rect width="90" height="56" fill="url(#f7)"/><g filter="url(#bl3)"><ellipse cx="14" cy="12" rx="14" ry="12" fill="#0e5a74" opacity=".7"/><ellipse cx="40" cy="52" rx="18" ry="8" fill="#2a7a86" opacity=".6"/><ellipse cx="70" cy="36" rx="18" ry="12" fill="#5abcc8" opacity=".5"/></g>
<g filter="url(#bl1)"><path d="M52 0H86C82 6 74 8 68 12C62 18 56 20 50 22C48 26 46 30 44.500 37C43 32 43 28 42 24C38 22 34 23 28 24C32 20 36 19 40 17C40 12 41 8 42 5C44 8 46 10 48 12C50 8 51 4 52 0z" fill="#d01432"/><path d="M58 0H86C80 5 72 6 66 10C62 8 60 4 58 0z" fill="#9a0c24"/><path d="M50 12C54 10 58 12 60 15C56 18 52 18 50 16z" fill="#f06a6a" opacity=".8"/></g></svg></div><div class="b" style="left:1107px;top:260px;width:90px;height:56px;box-shadow:1px 1px 2px rgba(0,0,0,.45);"><svg class="b" style="left:0;top:0" width="90" height="56" viewBox="0 0 90 56"><defs><radialGradient id="f8" cx=".35" cy=".5" r=".8"><stop offset="0" stop-color="#fdf2f7"/><stop offset=".5" stop-color="#f8dcea"/><stop offset="1" stop-color="#ecb4d4"/></radialGradient></defs><rect width="90" height="56" fill="url(#f8)"/><g filter="url(#bl3)"><rect x="0" y="48" width="90" height="10" fill="#e6a2cc" opacity=".7"/><ellipse cx="84" cy="30" rx="10" ry="24" fill="#fbeaf2" opacity=".7"/></g>
<g filter="url(#bl1)"><path d="M66 32C68 40 70 48 71 56" stroke="#b07050" stroke-width="1.800" fill="none"/>
<path d="M63 28C54 26 40 20 30 12C38 13 54 18 64 25z" fill="#f5a832"/><path d="M62 26C54 20 46 12 42 5C50 8 60 16 65 24z" fill="#f8b648"/><path d="M64 26C60 18 56 8 56 0C62 4 66 14 68 26z" fill="#f5a030"/><path d="M67 26C68 16 70 6 75 1C76 8 74 18 70 27z" fill="#f8b040"/><path d="M69 27C72 18 76 10 81 5C80 12 76 22 71 29z" fill="#f6b850" opacity=".85"/><path d="M62 31C52 32 40 34 29 35C40 31 52 29 62 28z" fill="#f6a238" opacity=".9"/>
<ellipse cx="64.500" cy="29" rx="4.500" ry="4" fill="#8a3a7a"/></g></svg></div><div class="b" style="left:969px;top:405px;width:90px;height:29px;box-shadow:1px 1px 2px rgba(0,0,0,.45);"><svg class="b" style="left:0;top:0" width="90" height="29" viewBox="0 0 90 29"><defs><linearGradient id="f9" x1="0" y1="0" x2="1" y2="0"><stop offset="0" stop-color="#a4dcc0"/><stop offset=".3" stop-color="#e4f4ea"/><stop offset=".6" stop-color="#b8e4d0"/><stop offset="1" stop-color="#84c89e"/></linearGradient></defs><rect width="90" height="29" fill="url(#f9)"/><g filter="url(#bl3)"><rect x="0" y="0" width="90" height="5" fill="#92d2b0" opacity=".7"/><rect x="0" y="25" width="90" height="5" fill="#92d2b0" opacity=".6"/></g>
<g filter="url(#bl1)"><path d="M57 16C60 20 62 24 64 29" stroke="#c46a80" stroke-width="1.300" fill="none"/><path d="M55 12l3-7l3 5l5-1l-3 5l4 4l-6 1l-1 5l-4-4l-6 2l2-5l-5-3l6-1z" fill="#d62a8a" stroke="#d62a8a" stroke-width="2" stroke-linejoin="round"/><circle cx="55.500" cy="12" r="1.800" fill="#6a1048"/></g></svg></div><div class="b" style="left:1107px;top:377px;width:90px;height:56px;box-shadow:1px 1px 2px rgba(0,0,0,.45);"><svg class="b" style="left:0;top:0" width="90" height="56" viewBox="0 0 90 56"><defs><radialGradient id="f10" cx=".72" cy=".6" r=".42"><stop offset="0" stop-color="#c07010"/><stop offset=".6" stop-color="#6a4412"/><stop offset="1" stop-color="#2c2a14" stop-opacity="0"/></radialGradient>
<linearGradient id="f10b" x1="0" y1="0" x2="0" y2="1"><stop offset="0" stop-color="#3a5a48"/><stop offset=".3" stop-color="#3a3c1c"/><stop offset="1" stop-color="#0e0c06"/></linearGradient></defs><rect width="90" height="56" fill="url(#f10b)"/><rect width="90" height="56" fill="url(#f10)"/>
<g filter="url(#bl3)"><path d="M0 0H44C30 6 14 8 0 6z" fill="#48a0ac" opacity=".9"/><ellipse cx="22" cy="24" rx="14" ry="8" fill="#5a5420" opacity=".6"/></g>
<g filter="url(#bl1)"><path d="M64 28C65 38 65 48 66 56" stroke="#4a1e0a" stroke-width="1.600" fill="none"/><path d="M30 44V56" stroke="#4a1e0a" stroke-width="1.400" fill="none"/>
<path d="M53 8C55 10 57 12 58 14C59 10 60 8 62 6C64 9 65 11 66 14C67 11 69 9 71 7C72 16 70 24 64 29C58 28 54 18 53 8z" fill="#f2481c"/><path d="M58 14C59 20 61 26 64 29C66 24 67 18 66 14C64 18 60 18 58 14z" fill="#ff7a3a"/>
<path d="M25 26C27 27 29 29 30 31C31 28 32 26 34 24C36 30 37 40 33 45C29 47 26 44 25 38C24 34 24 30 25 26z" fill="#e8381a"/><path d="M28 32C29 38 30 42 32 45C34 40 34 34 32 30z" fill="#ff6a3a" opacity=".8"/></g></svg></div><div class="b" style="left:969px;top:494px;width:90px;height:56px;box-shadow:1px 1px 2px rgba(0,0,0,.45);"><svg class="b" style="left:0;top:0" width="90" height="56" viewBox="0 0 90 56"><defs><radialGradient id="f11" cx=".45" cy=".45" r=".75"><stop offset="0" stop-color="#eaf6e0"/><stop offset=".5" stop-color="#c8e8b8"/><stop offset="1" stop-color="#8ccc7c"/></radialGradient></defs><rect width="90" height="56" fill="url(#f11)"/><g filter="url(#bl3)"><ellipse cx="10" cy="30" rx="12" ry="30" fill="#8ed07e" opacity=".7"/><ellipse cx="84" cy="12" rx="10" ry="14" fill="#d8eecc" opacity=".7"/></g>
<g filter="url(#bl1)"><path d="M68 46L70 56" stroke="#5a9a3a" stroke-width="2.200"/>
<path d="M64 36C56 40 48 46 39 49C44 50 54 48 62 44zM68 36C76 30 84 28 90 27V33C84 36 76 38 68 40zM68 40C76 40 84 42 90 45V50C82 50 74 46 66 42zM64 40C64 46 66 50 68 53C70 48 70 44 68 40zM60 36C54 34 50 34 46 36C50 40 56 40 62 40z" fill="#f58a8e"/>
<path d="M66 30C66 22 62 14 63.500 6" stroke="#e24a5a" stroke-width="1.800" fill="none"/><circle cx="63.500" cy="6" r="2.200" fill="#e03a50"/><path d="M60 30C60 26 58 24 57 23" stroke="#e24a5a" stroke-width="1.400" fill="none"/><circle cx="57" cy="23" r="1.800" fill="#e03a50"/><path d="M63 30C64 26 63 22 62 20" stroke="#e24a5a" stroke-width="1.400" fill="none"/><circle cx="62.500" cy="20" r="1.800" fill="#e03a50"/>
<ellipse cx="63.500" cy="35" rx="7.500" ry="6" fill="#fbe4e0"/></g></svg></div><div class="b" style="left:1107px;top:494px;width:90px;height:56px;box-shadow:1px 1px 2px rgba(0,0,0,.45);"><svg class="b" style="left:0;top:0" width="90" height="56" viewBox="0 0 90 56"><defs><linearGradient id="f12" x1="0" y1="0" x2="0" y2="1"><stop offset="0" stop-color="#cfdc2a"/><stop offset=".3" stop-color="#e6ee70"/><stop offset=".6" stop-color="#d6e668"/><stop offset=".8" stop-color="#96cc34"/><stop offset="1" stop-color="#6cb81e"/></linearGradient></defs><rect width="90" height="56" fill="url(#f12)"/><g filter="url(#bl3)"><ellipse cx="80" cy="18" rx="14" ry="18" fill="#ecdca0" opacity=".8"/><ellipse cx="30" cy="24" rx="24" ry="10" fill="#eef288" opacity=".6"/><ellipse cx="8" cy="4" rx="12" ry="8" fill="#b4c814" opacity=".6"/></g>
<g filter="url(#bl1)"><path d="M66 0C58 8 52 22 54 34C56 42 60 48 64.500 51C67 40 68 28 67 16C67 10 67 4 68 0z" fill="#3f9a2e"/><path d="M74 0C70 10 70 24 72 34C73 38 74 41 75.500 43C80 34 84 22 84 10C84 6 84 2 83 0z" fill="#3a922a"/>
<path d="M66 2C62 14 60 28 62 42M78 2C76 14 74 26 75 38" stroke="#7cc856" stroke-width="1" fill="none"/><path d="M54 28C55 38 58 44 62 48" stroke="#2a7a1e" stroke-width="1.200" fill="none" opacity=".7"/></g></svg></div><div class="t c" style="left:955px;top:320px;width:120px;color:#000;">img7.jpg</div><div class="t c" style="left:1093px;top:320px;width:120px;color:#000;">img8.jpg</div><div class="t c" style="left:955px;top:437px;width:120px;color:#000;">img9.jpg</div><div class="t c" style="left:1093px;top:437px;width:120px;color:#000;">img10.jpg</div><div class="t c" style="left:955px;top:554px;width:120px;color:#000;">img11.jpg</div><div class="t c" style="left:1093px;top:554px;width:120px;color:#000;">img12.jpg</div><div class="b" style="left:948px;top:572px;width:309px;height:82px;background:#fff;border-top:1px solid #d9d9d9;"></div><svg class="b" style="left:980px;top:581px;" width="30" height="45" viewBox="0 0 30 45"><defs><linearGradient id="dfg" x1="0" y1="0" x2="1" y2="1"><stop offset="0" stop-color="#ffeaa8"/><stop offset="1" stop-color="#f8d36c"/></linearGradient></defs><path d="M0 0.500h26.500v22h2.500v14H0z" fill="url(#dfg)"/><path d="M0 0.500L9 5.500V44L0 37z" fill="#ffedb6"/><path d="M9 5.500V44" stroke="#f0cf74" stroke-width="0.800"/></svg><div class="t" style="left:1036px;top:580px;font-size:13px;color:#2f3c52;">6 items</div><div class="t" style="left:659px;top:635px;color:#555;">6 items</div><div class="b" style="left:1209px;top:631px;width:22px;height:23px;background:#96bfe0;"></div><svg class="b" style="left:1212px;top:635px;" width="16" height="13" viewBox="0 0 16 13"><rect x="0.500" y="0.5" width="4" height="4" fill="none" stroke="#2a7fd0"/><rect x="2" y="2" width="1" height="1" fill="#2a7fd0"/><rect x="6" y="2" width="4" height="1" fill="#2a7fd0"/><rect x="12" y="2" width="4" height="1" fill="#2a7fd0"/><rect x="0.500" y="4.5" width="4" height="4" fill="none" stroke="#2a7fd0"/><rect x="2" y="6" width="1" height="1" fill="#2a7fd0"/><rect x="6" y="6" width="4" height="1" fill="#2a7fd0"/><rect x="12" y="6" width="4" height="1" fill="#2a7fd0"/><rect x="0.500" y="8.5" width="4" height="4" fill="none" stroke="#2a7fd0"/><rect x="2" y="10" width="1" height="1" fill="#2a7fd0"/><rect x="6" y="10" width="4" height="1" fill="#2a7fd0"/><rect x="12" y="10" width="4" height="1" fill="#2a7fd0"/></svg><svg class="b" style="left:1235px;top:636px;" width="14" height="11" viewBox="0 0 14 11"><rect x="0.500" y="0.500" width="13" height="10" fill="none" stroke="#2a7fd0"/><rect x="2" y="2" width="10" height="7" fill="#2e86d6"/></svg>
<div class="b" style="left:5px;top:658px;width:1254px;height:1px;background:#c9c9c9;"></div><div class="t" style="left:7px;top:665px;width:13px;height:120px;writing-mode:vertical-rl;font-size:16px;line-height:13px;color:#1b7fd4;">Transfer Queue</div><svg class="b" style="left:29px;top:665px;" width="3" height="16" viewBox="0 0 3 16"><rect x="0" y="0" width="3" height="1" fill="#b9b9b9"/><rect x="0" y="2" width="3" height="1" fill="#b9b9b9"/><rect x="0" y="4" width="3" height="1" fill="#b9b9b9"/><rect x="0" y="6" width="3" height="1" fill="#b9b9b9"/><rect x="0" y="8" width="3" height="1" fill="#b9b9b9"/><rect x="0" y="10" width="3" height="1" fill="#b9b9b9"/><rect x="0" y="12" width="3" height="1" fill="#b9b9b9"/><rect x="0" y="14" width="3" height="1" fill="#b9b9b9"/></svg><svg class="b" style="left:39px;top:664px;" width="15" height="17" viewBox="0 0 15 17"><path d="M0.500 0.500h8l3.500 3.500v12h-11.500z" fill="#f4f4f4" stroke="#8a8a8a"/><path d="M8.500 0.500v3.500h3.500" fill="#fff" stroke="#8a8a8a"/><path d="M10.500 9.500v7M7 13h7" stroke="#1fa51f" stroke-width="2.400"/></svg><svg class="b" style="left:59px;top:664px;" width="17" height="16" viewBox="0 0 17 16"><rect x="0.500" y="0.500" width="16" height="15" fill="#5e5e5e" stroke="#4a4a4a"/><rect x="3" y="0" width="11" height="7.500" fill="#ececec"/><rect x="3" y="0" width="11" height="1.500" fill="#2a6cc8"/><rect x="4" y="10" width="9" height="6" fill="#9a9a9a"/><rect x="5.500" y="11" width="2.500" height="4.500" fill="#f0f0f0"/></svg><svg class="b" style="left:81px;top:672px;" width="5" height="3" viewBox="0 0 5 3"><path d="M0 0h5l-2.5 3z" fill="#666"/></svg><div class="b" style="left:91px;top:661px;width:1px;height:23px;background:#dcdcdc;"></div><div class="b" style="left:162px;top:661px;width:1px;height:23px;background:#dcdcdc;"></div><div class="b" style="left:189px;top:661px;width:1px;height:23px;background:#dcdcdc;"></div><div class="b" style="left:228px;top:661px;width:1px;height:23px;background:#dcdcdc;"></div><div class="b" style="left:265px;top:661px;width:1px;height:23px;background:#dcdcdc;"></div><svg class="b" style="left:101px;top:665.5px;" width="10" height="13" viewBox="0 0 10 13"><path d="M0 0L10 6.500L0 13z" fill="#bdbdbd"/></svg><svg class="b" style="left:122px;top:665.5px;" width="11" height="13" viewBox="0 0 11 13"><rect x="0.500" y="0.500" width="3.500" height="12" fill="#ffb000" stroke="#d88a00"/><rect x="6.500" y="0.500" width="3.500" height="12" fill="#ffb000" stroke="#d88a00"/></svg><div class="b" style="left:143px;top:666px;width:12px;height:12px;background:#e30613;border:1px solid #c4000c;"></div><svg class="b" style="left:169px;top:665.5px;" width="14" height="13" viewBox="0 0 14 13"><path d="M1.500 1L12.500 12M12.500 1L1.500 12" stroke="#a6a6a6" stroke-width="2.400"/></svg><svg class="b" style="left:196px;top:664px;" width="15" height="16" viewBox="0 0 15 16"><rect x="0" y="0.300" width="10" height="10.500" fill="#e2e2e2"/><rect x="3.500" y="3" width="10.500" height="12.700" fill="#d8d8d8" stroke="#eeeeee" stroke-width="0.800"/></svg><svg class="b" style="left:217px;top:672px;" width="5" height="3" viewBox="0 0 5 3"><path d="M0 0h5l-2.5 3z" fill="#9a9a9a"/></svg><svg class="b" style="left:234px;top:665px;" width="15" height="15" viewBox="0 0 15 15"><path d="M3 0.500H0.500V14.500H3M12 0.500h2.500V14.500H12" fill="none" stroke="#6a6a6a"/><rect x="3.500" y="3.500" width="8" height="8" fill="#a8d0f4" stroke="#4a90d9"/></svg><svg class="b" style="left:255px;top:672px;" width="5" height="3" viewBox="0 0 5 3"><path d="M0 0h5l-2.5 3z" fill="#666"/></svg><svg class="b" style="left:271px;top:664px;" width="16" height="17" viewBox="0 0 16 17"><circle cx="8" cy="8.500" r="7.300" fill="#e8e8e8" stroke="#6a6a6a" stroke-width="1.200"/><circle cx="8" cy="8.500" r="5.300" fill="#fff" stroke="#bbb" stroke-width="0.600"/><path d="M8 8.500L11.500 6.500M8 8.500L5 6.500" stroke="#333" stroke-width="1" fill="none"/><path d="M8 3.500v1M8 12.500v1M3 8.500h1M12 8.500h1" stroke="#333" stroke-width="1"/></svg><svg class="b" style="left:292px;top:666px;" width="17" height="14" viewBox="0 0 17 14"><path d="M0.500 3L4 6L0.500 9z" fill="#1a56b0"/><path d="M6.300 0.500v11M9 0.500v11" stroke="#1a4fa8" stroke-width="1.700"/><path d="M11 1.500L15.800 6L11 10.500z" fill="#2a6cd0"/><path d="M10.500 10l2 2.500L16.500 8" fill="none" stroke="#1fa51f" stroke-width="1.600"/></svg><svg class="b" style="left:312px;top:672px;" width="5" height="3" viewBox="0 0 5 3"><path d="M0 0h5l-2.5 3z" fill="#555"/></svg><div class="t" style="left:322px;top:665px;color:#333;letter-spacing:-0.3px;">Workers</div><div class="b inp" style="left:368px;top:661px;width:46px;height:23px;"></div><div class="t r" style="left:368px;top:665px;width:24.5px;color:#000;">1</div><svg class="b" style="left:403px;top:667px;" width="5" height="4" viewBox="0 0 5 4"><path d="M0 3.500L2.500 0.500L5 3.500z" fill="#444"/></svg><svg class="b" style="left:403px;top:676px;" width="5" height="4" viewBox="0 0 5 4"><path d="M0 0.500L2.500 3.500L5 0.500z" fill="#444"/></svg><svg class="b" style="left:1250px;top:677px;" width="5" height="3" viewBox="0 0 5 3"><path d="M0 0h5l-2.5 3z" fill="#666"/></svg><div class="b" style="left:26px;top:685px;width:1233px;height:1px;background:#dadada;"></div><div class="b" style="left:278px;top:710px;width:2px;height:87px;background:#ebf1fa;"></div><div class="b" style="left:278px;top:686px;width:1px;height:24px;background:#e4e4e4;"></div><div class="b" style="left:398px;top:710px;width:2px;height:87px;background:#ebf1fa;"></div><div class="b" style="left:398px;top:686px;width:1px;height:24px;background:#e4e4e4;"></div><div class="b" style="left:518px;top:710px;width:2px;height:87px;background:#ebf1fa;"></div><div class="b" style="left:518px;top:686px;width:1px;height:24px;background:#e4e4e4;"></div><div class="b" style="left:638px;top:710px;width:2px;height:87px;background:#ebf1fa;"></div><div class="b" style="left:638px;top:686px;width:1px;height:24px;background:#e4e4e4;"></div><div class="b" style="left:772px;top:710px;width:2px;height:87px;background:#ebf1fa;"></div><div class="b" style="left:772px;top:686px;width:1px;height:24px;background:#e4e4e4;"></div><div class="b" style="left:892px;top:710px;width:2px;height:87px;background:#ebf1fa;"></div><div class="b" style="left:892px;top:686px;width:1px;height:24px;background:#e4e4e4;"></div><div class="b" style="left:1012px;top:710px;width:2px;height:87px;background:#ebf1fa;"></div><div class="b" style="left:1012px;top:686px;width:1px;height:24px;background:#e4e4e4;"></div><div class="b" style="left:1094px;top:710px;width:2px;height:87px;background:#ebf1fa;"></div><div class="b" style="left:1094px;top:686px;width:1px;height:24px;background:#e4e4e4;"></div><div class="b" style="left:1214px;top:710px;width:2px;height:87px;background:#ebf1fa;"></div><div class="b" style="left:1214px;top:686px;width:1px;height:24px;background:#e4e4e4;"></div><div class="b" style="left:26px;top:728px;width:1233px;height:1px;background:#eceff3;"></div><div class="b" style="left:26px;top:747px;width:1233px;height:1px;background:#eceff3;"></div><div class="b" style="left:26px;top:766px;width:1233px;height:1px;background:#eceff3;"></div><div class="b" style="left:26px;top:785px;width:1233px;height:1px;background:#eceff3;"></div><div class="t" style="left:32px;top:690px;color:#000;">Name</div><div class="t" style="left:286px;top:690px;color:#000;">Operation</div><div class="t r" style="left:393px;top:690px;width:120px;color:#000;">Size</div><div class="t" style="left:525px;top:690px;color:#000;">Source</div><div class="t" style="left:645px;top:690px;color:#000;">Destination</div><div class="t r" style="left:767px;top:690px;width:120px;color:#000;">Start time</div><div class="t r" style="left:887px;top:690px;width:120px;color:#000;">Finish time</div><div class="t" style="left:1019px;top:690px;color:#000;">Status</div><div class="t r" style="left:1089px;top:690px;width:120px;color:#000;">Average speed</div><div class="t" style="left:1255px;top:690px;color:#000;">C</div><div class="b" style="left:26px;top:799px;width:1233px;height:15px;background:#f0f0f0;"></div><div class="b" style="left:43px;top:799px;width:954px;height:15px;background:#cdcdcd;"></div><svg class="b" style="left:32px;top:803px;" width="5" height="8" viewBox="0 0 5 8"><path d="M4.500 0.500L1 4L4.500 7.500" fill="none" stroke="#333" stroke-width="1.600"/></svg><svg class="b" style="left:1248px;top:803px;" width="5" height="8" viewBox="0 0 5 8"><path d="M0.500 0.500L4 4L0.500 7.500" fill="none" stroke="#333" stroke-width="1.600"/></svg><div class="b" style="left:26px;top:815px;width:1233px;height:1px;background:#dadada;"></div><div class="t" style="left:29px;top:818px;color:#555;letter-spacing:-0.25px;">Idle</div><div class="t" style="left:421px;top:818px;color:#555;letter-spacing:-0.25px;">C:\User...\Transfer Queue.xml</div><div class="t" style="left:665px;top:818px;color:#555;letter-spacing:-0.25px;">Items: 0</div><div class="t" style="left:761px;top:818px;color:#555;letter-spacing:-0.25px;">Total: 0 bytes</div><div class="t" style="left:855px;top:818px;color:#555;letter-spacing:-0.25px;">Transferred: 0 bytes</div><div class="t" style="left:992px;top:818px;color:#555;letter-spacing:-0.25px;">In Speed: 0 bytes/s</div><div class="t" style="left:1123px;top:818px;color:#555;letter-spacing:-0.25px;">Out Speed: 0 bytes/s</div><div class="b" style="left:26px;top:835px;width:92px;height:23px;background:#0072c6;"></div><div class="t c w" style="left:26px;top:839px;width:92px;letter-spacing:-0.25px;">Transfer Queue</div><div class="t" style="left:124px;top:839px;color:#666;">Scheduler</div><div class="t" style="left:188px;top:839px;color:#666;">Speed</div><div class="t" style="left:232px;top:839px;color:#666;">Multi Upload</div><svg class="b" style="left:8px;top:812px;" width="9" height="5" viewBox="0 0 9 5"><path d="M0 0h9l-4.500 5z" fill="#555"/></svg><svg class="b" style="left:9px;top:823px;" width="8" height="11" viewBox="0 0 8 11"><path d="M1.500 0.500h5M2.500 0.500v5M5.500 0.500v5M0 5.500h8M4 5.500v5.500" fill="none" stroke="#444" stroke-width="1.300"/><rect x="3.500" y="0.500" width="2.500" height="5" fill="#444"/></svg><svg class="b" style="left:9px;top:842px;" width="8" height="8" viewBox="0 0 8 8"><path d="M0.700 0.700l6.600 6.600M7.300 0.700l-6.600 6.600" stroke="#444" stroke-width="1.700"/></svg>
</body></html>
